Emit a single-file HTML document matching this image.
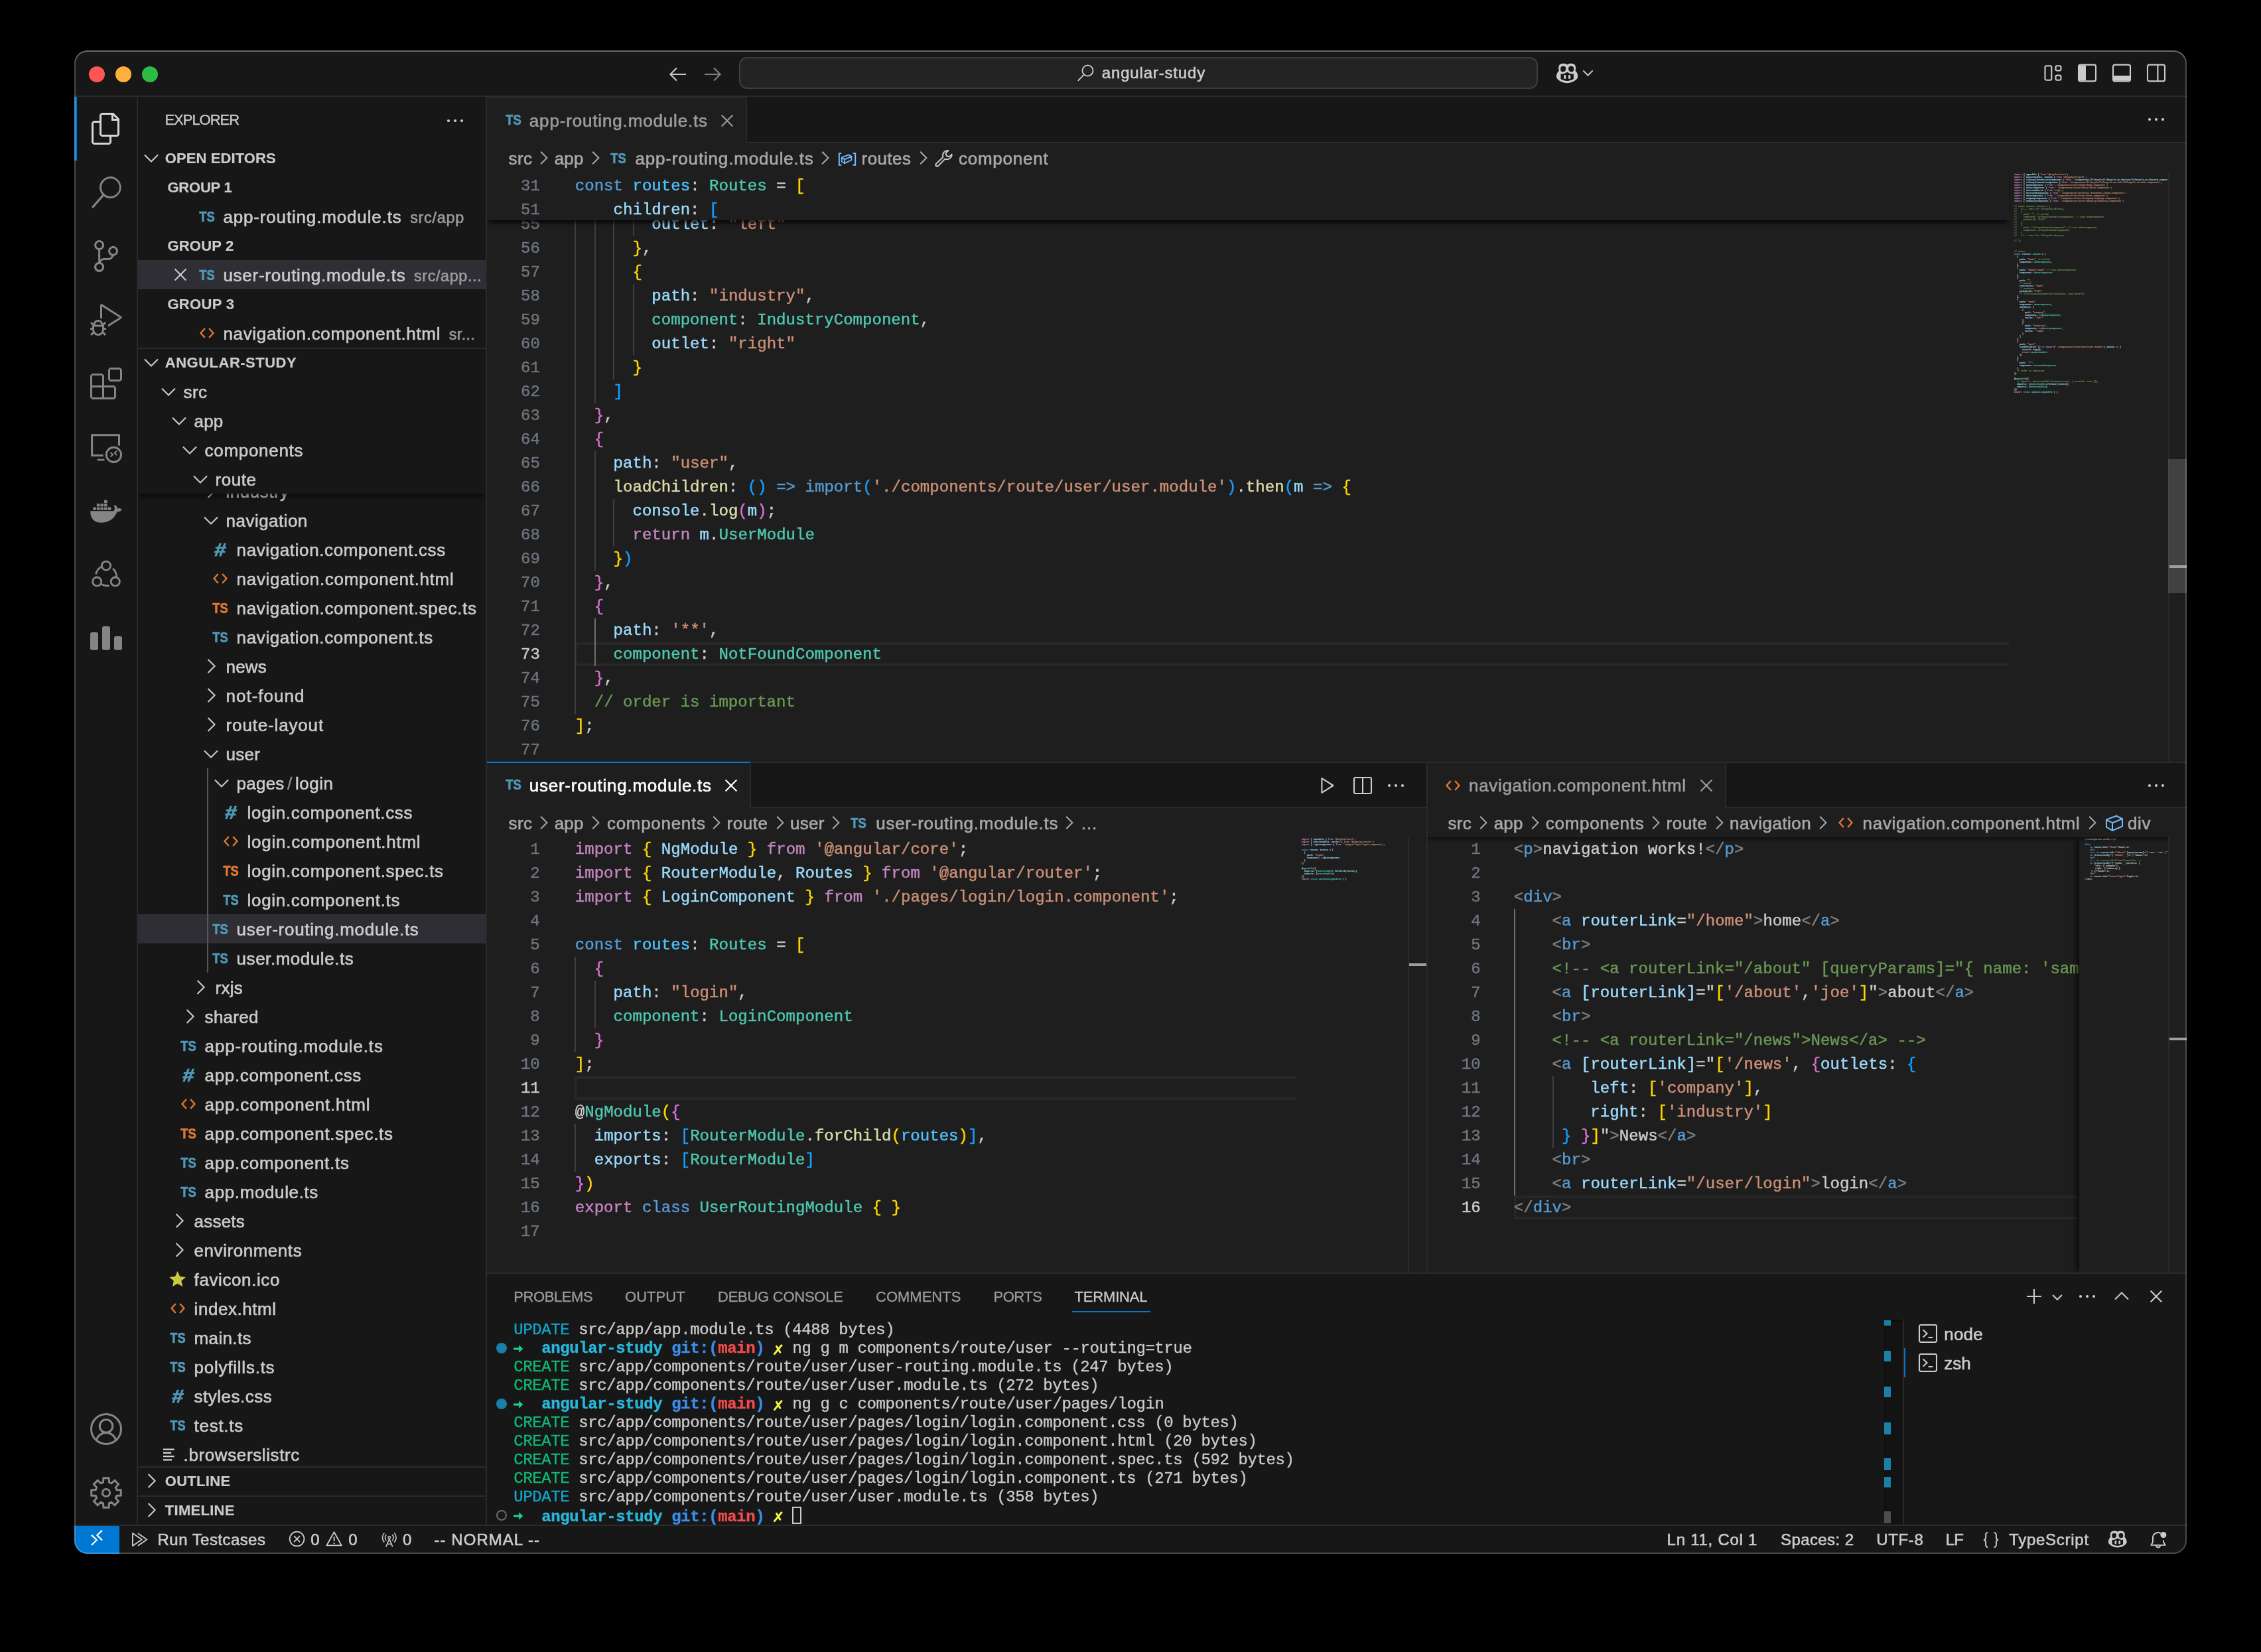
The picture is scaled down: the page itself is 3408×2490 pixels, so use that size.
<!DOCTYPE html><html><head><meta charset="utf-8"><title>angular-study</title><style>
*{box-sizing:border-box}
html,body{margin:0;padding:0;background:#000;overflow:hidden}
body{width:3408px;height:2490px}
#root{will-change:transform;opacity:.999;position:absolute;left:0;top:0;width:1704px;height:1245px;transform:scale(2);transform-origin:0 0;font-family:"Liberation Sans",sans-serif;font-size:13px;color:#ccc;-webkit-font-smoothing:antialiased;-webkit-text-stroke:.3px}
#win{position:absolute;left:56px;top:38px;width:1592px;height:1133px;border-radius:10px;overflow:hidden;background:#1f1f1f}
#winb{position:absolute;left:56px;top:38px;width:1592px;height:1133px;border-radius:10px;box-shadow:inset 0 0 0 1px rgba(255,255,255,.22), inset 0 1px 0 0 rgba(255,255,255,.18);pointer-events:none}
.abs{position:absolute}
.mono{font-family:"Liberation Mono",monospace}
.ui{letter-spacing:.33px}
.nw{white-space:pre}
/* code */
.code{position:absolute;font-family:"Liberation Mono",monospace;font-size:12.04px;line-height:18px;white-space:pre;color:#ccc;-webkit-text-stroke:.22px}
.code .tx,.code .num{top:.4px;transform:translateY(.5px)}
.code .st .tx,.code .st .num{top:1.4px}
.code .up .tx,.code .up .num{transform:translateY(-.5px)}
.ln{position:absolute;height:18px;left:0;right:0}
.num{position:absolute;text-align:right;color:#6e7681;width:40px}
.num.cur{color:#ccc}
.tx{position:absolute}
.gd{position:absolute;top:0;width:1px;height:18px;background:#404040}
.gd.a{background:#707070}
.k{color:#569cd6}.c{color:#c586c0}.v{color:#9cdcfe}.n{color:#4fc1ff}.t{color:#4ec9b0}.f{color:#dcdcaa}.s{color:#ce9178}.m{color:#6a9955}.p{color:#cccccc}.b1{color:#ffd700}.b2{color:#da70d6}.b3{color:#179fff}.g{color:#808080}.w{color:#cccccc}
/* tree */
.row{position:absolute;left:0;width:262px;height:22px;line-height:23px;white-space:pre;color:#ccc;letter-spacing:.45px}
.row .lbl{position:absolute;top:0}
.row .ico{position:absolute;top:3px;width:16px;height:16px}
.fi{position:absolute;top:0;width:20px;text-align:center;font-weight:700;letter-spacing:0;transform:scaleX(.82)}
.hdr{position:absolute;left:0;width:262px;height:22px;line-height:22px;font-size:11px;font-weight:700;color:#ccc;white-space:pre;-webkit-text-stroke:.1px}
.desc{color:#9d9d9d;font-size:11.7px}
</style></head><body><div id="root"><div id="win"><div class="abs" style="left:311px;top:35px;width:1281px;height:35px;background:#181818;border-bottom:1px solid #2b2b2b"></div><div class="abs nw" style="left:311px;top:35px;width:195.8px;height:35px;line-height:35px;background:#1f1f1f;border-right:1px solid #2b2b2b;border-top:1px solid #2b2b2b;color:#9d9d9d"><span class="abs" style="left:9.800000000000011px;top:-1px;width:20px;text-align:center;font-weight:700;font-size:11.2px;letter-spacing:0;color:#519aba;transform:scaleX(.82)">TS</span><span class="abs" style="left:31.899999999999977px;top:-.4px;transform:translateY(-.5px)"><span style="letter-spacing:0.421px">app-routing.module.ts</span></span><span class="abs" style="left:173.2px;top:8.5px"><svg xmlns="http://www.w3.org/2000/svg" viewBox="0 0 16 16" width="16" height="16" style="display:block;color:#9d9d9d;"><path d="M3.8 3.8L12.2 12.2M12.2 3.8L3.8 12.2" fill="none" stroke="currentColor" stroke-width="1.05" /></svg></span></div><div class="abs" style="left:1561px;top:44.3px"><svg xmlns="http://www.w3.org/2000/svg" viewBox="0 0 16 16" width="16" height="16" style="display:block;color:#ccc;"><circle cx="3" cy="8" r="1.05" fill="currentColor"/><circle cx="8" cy="8" r="1.05" fill="currentColor"/><circle cx="13" cy="8" r="1.05" fill="currentColor"/></svg></div><div class="abs nw" style="left:311px;top:70px;width:1281px;height:22px;line-height:22px;background:#1f1f1f;color:#a9a9a9;overflow:hidden"><span class="abs" style="left:16.30000000000001px;top:1px"><span style="letter-spacing:0.202px">src</span></span><span class="abs" style="left:34.89999999999999px;top:3px"><svg xmlns="http://www.w3.org/2000/svg" viewBox="0 0 16 16" width="16" height="16" style="display:block;color:#a9a9a9;"><path d="M5.6 3.4L10.2 8L5.6 12.6" fill="none" stroke="currentColor" stroke-width="1.0" /></svg></span><span class="abs" style="left:50.89999999999998px;top:1px"><span style="letter-spacing:0.066px">app</span></span><span class="abs" style="left:74.00000000000001px;top:3px"><svg xmlns="http://www.w3.org/2000/svg" viewBox="0 0 16 16" width="16" height="16" style="display:block;color:#a9a9a9;"><path d="M5.6 3.4L10.2 8L5.6 12.6" fill="none" stroke="currentColor" stroke-width="1.0" /></svg></span><span class="abs" style="left:89.30000000000001px;top:0px"><span class="abs" style="left:0px;top:0px;width:20px;text-align:center;font-weight:700;font-size:11.2px;letter-spacing:0;color:#519aba;transform:scaleX(.82)">TS</span></span><span class="abs" style="left:111.69999999999999px;top:1px"><span style="letter-spacing:0.421px">app-routing.module.ts</span></span><span class="abs" style="left:247.40000000000003px;top:3px"><svg xmlns="http://www.w3.org/2000/svg" viewBox="0 0 16 16" width="16" height="16" style="display:block;color:#a9a9a9;"><path d="M5.6 3.4L10.2 8L5.6 12.6" fill="none" stroke="currentColor" stroke-width="1.0" /></svg></span><span class="abs" style="left:263.79999999999995px;top:3.5px"><svg xmlns="http://www.w3.org/2000/svg" viewBox="0 0 16 16" width="15" height="15" style="display:block;color:#75beff;"><path d="M3.4 3.8H1.5V13.2H3.4M12.6 3.8H14.5V13.2H12.6" fill="none" stroke="currentColor" stroke-width="1.05" /><path d="M3.6 7.1L9.1 5L11.4 6.3L5.9 8.7ZM3.6 7.1V10.4L5.9 11.8V8.7M5.9 11.8L11.4 9.2V6.3" fill="none" stroke="currentColor" stroke-width="0.95" stroke-linejoin="round"/></svg></span><span class="abs" style="left:282.29999999999995px;top:1px"><span style="letter-spacing:0.21px">routes</span></span><span class="abs" style="left:320.99999999999994px;top:3px"><svg xmlns="http://www.w3.org/2000/svg" viewBox="0 0 16 16" width="16" height="16" style="display:block;color:#a9a9a9;"><path d="M5.6 3.4L10.2 8L5.6 12.6" fill="none" stroke="currentColor" stroke-width="1.0" /></svg></span><span class="abs" style="left:336.70000000000005px;top:3.5px"><svg xmlns="http://www.w3.org/2000/svg" viewBox="0 0 16 16" width="15" height="15" style="display:block;color:#ccc;"><path d="M14.2 4.6A3.9 3.9 0 0 1 8.7 8.3L3.3 13.9A1.2 1.2 0 0 1 1.6 12.2L7.2 6.8A3.9 3.9 0 0 1 11.4 1.6L9.3 3.8L10 5.8L12.1 6.6Z" fill="none" stroke="currentColor" stroke-width="1.05" stroke-linejoin="round"/></svg></span><span class="abs" style="left:355.5px;top:1px"><span style="letter-spacing:0.375px">component</span></span></div><div class="code" style="left:311px;top:92px;width:1267px;height:444px;overflow:hidden"><div class="ln " style="top:30px"><div class="gd" style="left:66.40px"></div><div class="gd" style="left:80.85px"></div><div class="gd" style="left:95.30px"></div><div class="gd" style="left:109.74px"></div><span class="num" style="left:0.0px">55</span><span class="tx" style="left:66.4px">        <span class="v">outlet</span>: <span class="s">&quot;left&quot;</span></span></div><div class="ln " style="top:48px"><div class="gd" style="left:66.40px"></div><div class="gd" style="left:80.85px"></div><div class="gd" style="left:95.30px"></div><span class="num" style="left:0.0px">56</span><span class="tx" style="left:66.4px">      <span class="b1">}</span>,</span></div><div class="ln " style="top:66px"><div class="gd" style="left:66.40px"></div><div class="gd" style="left:80.85px"></div><div class="gd" style="left:95.30px"></div><span class="num" style="left:0.0px">57</span><span class="tx" style="left:66.4px">      <span class="b1">{</span></span></div><div class="ln " style="top:84px"><div class="gd" style="left:66.40px"></div><div class="gd" style="left:80.85px"></div><div class="gd" style="left:95.30px"></div><div class="gd" style="left:109.74px"></div><span class="num" style="left:0.0px">58</span><span class="tx" style="left:66.4px">        <span class="v">path</span>: <span class="s">&quot;industry&quot;</span>,</span></div><div class="ln " style="top:102px"><div class="gd" style="left:66.40px"></div><div class="gd" style="left:80.85px"></div><div class="gd" style="left:95.30px"></div><div class="gd" style="left:109.74px"></div><span class="num" style="left:0.0px">59</span><span class="tx" style="left:66.4px">        <span class="t">component</span>: <span class="t">IndustryComponent</span>,</span></div><div class="ln " style="top:120px"><div class="gd" style="left:66.40px"></div><div class="gd" style="left:80.85px"></div><div class="gd" style="left:95.30px"></div><div class="gd" style="left:109.74px"></div><span class="num" style="left:0.0px">60</span><span class="tx" style="left:66.4px">        <span class="v">outlet</span>: <span class="s">&quot;right&quot;</span></span></div><div class="ln " style="top:138px"><div class="gd" style="left:66.40px"></div><div class="gd" style="left:80.85px"></div><div class="gd" style="left:95.30px"></div><span class="num" style="left:0.0px">61</span><span class="tx" style="left:66.4px">      <span class="b1">}</span></span></div><div class="ln " style="top:156px"><div class="gd" style="left:66.40px"></div><div class="gd" style="left:80.85px"></div><span class="num" style="left:0.0px">62</span><span class="tx" style="left:66.4px">    <span class="b3">]</span></span></div><div class="ln " style="top:174px"><div class="gd" style="left:66.40px"></div><span class="num" style="left:0.0px">63</span><span class="tx" style="left:66.4px">  <span class="b2">}</span>,</span></div><div class="ln " style="top:192px"><div class="gd" style="left:66.40px"></div><span class="num" style="left:0.0px">64</span><span class="tx" style="left:66.4px">  <span class="b2">{</span></span></div><div class="ln " style="top:210px"><div class="gd" style="left:66.40px"></div><div class="gd" style="left:80.85px"></div><span class="num" style="left:0.0px">65</span><span class="tx" style="left:66.4px">    <span class="v">path</span>: <span class="s">&quot;user&quot;</span>,</span></div><div class="ln " style="top:228px"><div class="gd" style="left:66.40px"></div><div class="gd" style="left:80.85px"></div><span class="num" style="left:0.0px">66</span><span class="tx" style="left:66.4px">    <span class="f">loadChildren</span>: <span class="b3">()</span> <span class="k">=&gt;</span> <span class="k">import</span><span class="b3">(</span><span class="s">&#x27;./components/route/user/user.module&#x27;</span><span class="b3">)</span>.<span class="f">then</span><span class="b3">(</span><span class="v">m</span> <span class="k">=&gt;</span> <span class="b1">{</span></span></div><div class="ln " style="top:246px"><div class="gd" style="left:66.40px"></div><div class="gd" style="left:80.85px"></div><div class="gd" style="left:95.30px"></div><span class="num" style="left:0.0px">67</span><span class="tx" style="left:66.4px">      <span class="v">console</span>.<span class="f">log</span><span class="b2">(</span><span class="v">m</span><span class="b2">)</span>;</span></div><div class="ln " style="top:264px"><div class="gd" style="left:66.40px"></div><div class="gd" style="left:80.85px"></div><div class="gd" style="left:95.30px"></div><span class="num" style="left:0.0px">68</span><span class="tx" style="left:66.4px">      <span class="c">return</span> <span class="v">m</span>.<span class="t">UserModule</span></span></div><div class="ln " style="top:282px"><div class="gd" style="left:66.40px"></div><div class="gd" style="left:80.85px"></div><span class="num" style="left:0.0px">69</span><span class="tx" style="left:66.4px">    <span class="b1">}</span><span class="b3">)</span></span></div><div class="ln " style="top:300px"><div class="gd" style="left:66.40px"></div><span class="num" style="left:0.0px">70</span><span class="tx" style="left:66.4px">  <span class="b2">}</span>,</span></div><div class="ln " style="top:318px"><div class="gd" style="left:66.40px"></div><span class="num" style="left:0.0px">71</span><span class="tx" style="left:66.4px">  <span class="b2">{</span></span></div><div class="ln " style="top:336px"><div class="gd" style="left:66.40px"></div><div class="gd a" style="left:80.85px"></div><span class="num" style="left:0.0px">72</span><span class="tx" style="left:66.4px">    <span class="v">path</span>: <span class="s">&#x27;**&#x27;</span>,</span></div><div class="ln " style="top:354px"><div class="abs" style="left:66.4px;top:0;width:1080.6px;height:18px;border:2px solid #282828;border-right:none"></div><div class="gd" style="left:66.40px"></div><div class="gd a" style="left:80.85px"></div><span class="num cur" style="left:0.0px">73</span><span class="tx" style="left:66.4px">    <span class="t">component</span>: <span class="t">NotFoundComponent</span></span></div><div class="ln " style="top:372px"><div class="gd" style="left:66.40px"></div><span class="num" style="left:0.0px">74</span><span class="tx" style="left:66.4px">  <span class="b2">}</span>,</span></div><div class="ln " style="top:390px"><div class="gd" style="left:66.40px"></div><span class="num" style="left:0.0px">75</span><span class="tx" style="left:66.4px">  <span class="m">// order is important</span></span></div><div class="ln " style="top:408px"><span class="num" style="left:0.0px">76</span><span class="tx" style="left:66.4px"><span class="b1">]</span>;</span></div><div class="ln " style="top:426px"><span class="num" style="left:0.0px">77</span><span class="tx" style="left:66.4px"></span></div><div class="abs" style="left:0;top:0;width:1147px;height:36px;background:#1f1f1f;box-shadow:0 3px 3px -1px rgba(0,0,0,.75)"><div class="ln st" style="top:0px"><span class="num" style="left:0.0px">31</span><span class="tx" style="left:66.4px"><span class="k">const</span> <span class="n">routes</span>: <span class="t">Routes</span> = <span class="b1">[</span></span></div><div class="ln st" style="top:18px"><span class="num" style="left:0.0px">51</span><span class="tx" style="left:66.4px">    <span class="v">children</span>: <span class="b3">[</span></span></div></div><div class="abs" style="left:1151px;top:0"><div style="width:116px;height:444px;overflow:hidden;font-family:'Liberation Mono',monospace;font-size:1.6665px;line-height:2px;white-space:pre;padding-top:.5px;font-weight:700;opacity:0.78;-webkit-text-stroke:0.1px;letter-spacing:0"><div style="height:2px"><span style="color:#c586c0">import</span> <span style="color:#cccccc">{</span> <span style="color:#9cdcfe">NgModule</span> <span style="color:#cccccc">}</span> <span style="color:#c586c0">from</span> <span style="color:#ce9178">&#x27;@angular/core&#x27;</span><span style="color:#cccccc">;</span></div><div style="height:2px"><span style="color:#c586c0">import</span> <span style="color:#cccccc">{</span> <span style="color:#9cdcfe">RouterModule</span><span style="color:#cccccc">,</span> <span style="color:#9cdcfe">Routes</span> <span style="color:#cccccc">}</span> <span style="color:#c586c0">from</span> <span style="color:#ce9178">&#x27;@angular/router&#x27;</span><span style="color:#cccccc">;</span></div><div style="height:2px"><span style="color:#c586c0">import</span> <span style="color:#cccccc">{</span> <span style="color:#9cdcfe">LifecycleOnDestoryComponent</span> <span style="color:#cccccc">}</span> <span style="color:#c586c0">from</span> '<span style="color:#cccccc">./</span><span style="color:#9cdcfe">components</span><span style="color:#cccccc">/</span><span style="color:#9cdcfe">lifecycle</span><span style="color:#cccccc">/</span><span style="color:#9cdcfe">lifecycle</span><span style="color:#cccccc">-</span><span style="color:#9cdcfe">on</span><span style="color:#cccccc">-</span><span style="color:#9cdcfe">destory</span><span style="color:#cccccc">/</span><span style="color:#9cdcfe">lifecycle</span><span style="color:#cccccc">-</span><span style="color:#9cdcfe">on</span><span style="color:#cccccc">-</span><span style="color:#9cdcfe">destory</span><span style="color:#cccccc">.</span><span style="color:#9cdcfe">compon</span></div><div style="height:2px"><span style="color:#c586c0">import</span> <span style="color:#cccccc">{</span> <span style="color:#9cdcfe">LifecycleOnInitComponent</span> <span style="color:#cccccc">}</span> <span style="color:#c586c0">from</span> <span style="color:#ce9178">&#x27;./components/lifecycle/lifecycle-on-init/lifecycle-on-init.component&#x27;</span><span style="color:#cccccc">;</span></div><div style="height:2px"><span style="color:#c586c0">import</span> <span style="color:#cccccc">{</span> <span style="color:#9cdcfe">HomeComponent</span> <span style="color:#cccccc">}</span> <span style="color:#c586c0">from</span> <span style="color:#ce9178">&#x27;./components/route/home/home.component&#x27;</span><span style="color:#cccccc">;</span></div><div style="height:2px"><span style="color:#c586c0">import</span> <span style="color:#cccccc">{</span> <span style="color:#9cdcfe">AboutComponent</span> <span style="color:#cccccc">}</span> <span style="color:#c586c0">from</span> <span style="color:#ce9178">&#x27;./components/route/about/about.component&#x27;</span><span style="color:#cccccc">;</span></div><div style="height:2px"><span style="color:#c586c0">import</span> <span style="color:#cccccc">{</span> <span style="color:#9cdcfe">NotFoundError</span> <span style="color:#cccccc">}</span> <span style="color:#c586c0">from</span> <span style="color:#ce9178">&#x27;rxjs&#x27;</span><span style="color:#cccccc">;</span></div><div style="height:2px"><span style="color:#c586c0">import</span> <span style="color:#cccccc">{</span> <span style="color:#9cdcfe">NotFoundComponent</span> <span style="color:#cccccc">}</span> <span style="color:#c586c0">from</span> <span style="color:#ce9178">&#x27;./components/route/not-found/not-found.component&#x27;</span><span style="color:#cccccc">;</span></div><div style="height:2px"><span style="color:#c586c0">import</span> <span style="color:#cccccc">{</span> <span style="color:#9cdcfe">NewsComponent</span> <span style="color:#cccccc">}</span> <span style="color:#c586c0">from</span> <span style="color:#ce9178">&#x27;./components/route/news/news.component&#x27;</span><span style="color:#cccccc">;</span></div><div style="height:2px"><span style="color:#c586c0">import</span> <span style="color:#cccccc">{</span> <span style="color:#9cdcfe">CompanyComponent</span> <span style="color:#cccccc">}</span> <span style="color:#c586c0">from</span> <span style="color:#ce9178">&#x27;./components/route/company/company.component&#x27;</span><span style="color:#cccccc">;</span></div><div style="height:2px"><span style="color:#c586c0">import</span> <span style="color:#cccccc">{</span> <span style="color:#9cdcfe">IndustryComponent</span> <span style="color:#cccccc">}</span> <span style="color:#c586c0">from</span> <span style="color:#ce9178">&#x27;./components/route/industry/industry.component&#x27;</span><span style="color:#cccccc">;</span></div><div style="height:2px"></div><div style="height:2px"><span style="color:#6a9955">// const routes: Routes = [</span></div><div style="height:2px"><span style="color:#6a9955">//   //--- test for lifecycle-destroy--</span></div><div style="height:2px"><span style="color:#6a9955">//   {</span></div><div style="height:2px"><span style="color:#6a9955">//     path: &quot;&quot;, // XX\\XX</span></div><div style="height:2px"><span style="color:#6a9955">//     component: LifecycleOnDestoryComponent, // XXXX HomeComponent</span></div><div style="height:2px"><span style="color:#6a9955">//     pathMatch: &quot;full&quot;</span></div><div style="height:2px"><span style="color:#6a9955">//   },</span></div><div style="height:2px"><span style="color:#6a9955">//   {</span></div><div style="height:2px"><span style="color:#6a9955">//     path: &quot;LifecycleOnInitComponent&quot;, // XXXX AboutComponent</span></div><div style="height:2px"><span style="color:#6a9955">//     component: LifecycleOnInitComponent</span></div><div style="height:2px"><span style="color:#6a9955">//   }</span></div><div style="height:2px"><span style="color:#6a9955">//   //--- test for lifecycle-destroy--</span></div><div style="height:2px"></div><div style="height:2px"><span style="color:#6a9955">// ];</span></div><div style="height:2px"></div><div style="height:2px"></div><div style="height:2px"></div><div style="height:2px"><span style="color:#6a9955">// route</span></div><div style="height:2px"><span style="color:#569cd6">const</span> <span style="color:#9cdcfe">routes</span><span style="color:#cccccc">:</span> <span style="color:#4ec9b0">Routes</span> <span style="color:#cccccc">=</span> <span style="color:#cccccc">[</span></div><div style="height:2px">  <span style="color:#cccccc">{</span></div><div style="height:2px">    <span style="color:#9cdcfe">path</span><span style="color:#cccccc">:</span> <span style="color:#ce9178">&quot;home&quot;</span><span style="color:#cccccc">,</span> <span style="color:#6a9955">// XX\\XX</span></div><div style="height:2px">    <span style="color:#9cdcfe">component</span><span style="color:#cccccc">:</span> <span style="color:#4ec9b0">HomeComponent</span><span style="color:#cccccc">,</span></div><div style="height:2px">  <span style="color:#cccccc">},</span></div><div style="height:2px">  <span style="color:#cccccc">{</span></div><div style="height:2px">    <span style="color:#9cdcfe">path</span><span style="color:#cccccc">:</span> <span style="color:#ce9178">&quot;about/:name&quot;</span><span style="color:#cccccc">,</span> <span style="color:#6a9955">// XXXX AboutComponent</span></div><div style="height:2px">    <span style="color:#9cdcfe">component</span><span style="color:#cccccc">:</span> <span style="color:#4ec9b0">AboutComponent</span></div><div style="height:2px">  <span style="color:#cccccc">},</span></div><div style="height:2px">  <span style="color:#cccccc">{</span></div><div style="height:2px">    <span style="color:#9cdcfe">path</span><span style="color:#cccccc">:</span> <span style="color:#ce9178">&quot;&quot;</span><span style="color:#cccccc">,</span></div><div style="height:2px">    <span style="color:#6a9955">// XXXXXX</span></div><div style="height:2px">    <span style="color:#9cdcfe">redirectTo</span><span style="color:#cccccc">:</span> <span style="color:#ce9178">&quot;home&quot;</span><span style="color:#cccccc">,</span></div><div style="height:2px">    <span style="color:#6a9955">// XXXXXXXX</span></div><div style="height:2px">    <span style="color:#9cdcfe">pathMatch</span><span style="color:#cccccc">:</span> <span style="color:#ce9178">&quot;full&quot;</span></div><div style="height:2px">    <span style="color:#6a9955">// full\\XXXXXXXXXXprefix\\XXXXXXXX, XXXX\\prefix</span></div><div style="height:2px">  <span style="color:#cccccc">},</span></div><div style="height:2px">  <span style="color:#cccccc">{</span></div><div style="height:2px">    <span style="color:#9cdcfe">path</span><span style="color:#cccccc">:</span> <span style="color:#ce9178">&quot;news&quot;</span><span style="color:#cccccc">,</span></div><div style="height:2px">    <span style="color:#9cdcfe">component</span><span style="color:#cccccc">:</span> <span style="color:#4ec9b0">NewsComponent</span><span style="color:#cccccc">,</span></div><div style="height:2px">    <span style="color:#9cdcfe">children</span><span style="color:#cccccc">:</span> <span style="color:#cccccc">[</span></div><div style="height:2px">      <span style="color:#cccccc">{</span></div><div style="height:2px">        <span style="color:#9cdcfe">path</span><span style="color:#cccccc">:</span> <span style="color:#ce9178">&quot;company&quot;</span><span style="color:#cccccc">,</span></div><div style="height:2px">        <span style="color:#9cdcfe">component</span><span style="color:#cccccc">:</span> <span style="color:#4ec9b0">CompanyComponent</span><span style="color:#cccccc">,</span></div><div style="height:2px">        <span style="color:#9cdcfe">outlet</span><span style="color:#cccccc">:</span> <span style="color:#ce9178">&quot;left&quot;</span></div><div style="height:2px">      <span style="color:#cccccc">},</span></div><div style="height:2px">      <span style="color:#cccccc">{</span></div><div style="height:2px">        <span style="color:#9cdcfe">path</span><span style="color:#cccccc">:</span> <span style="color:#ce9178">&quot;industry&quot;</span><span style="color:#cccccc">,</span></div><div style="height:2px">        <span style="color:#9cdcfe">component</span><span style="color:#cccccc">:</span> <span style="color:#4ec9b0">IndustryComponent</span><span style="color:#cccccc">,</span></div><div style="height:2px">        <span style="color:#9cdcfe">outlet</span><span style="color:#cccccc">:</span> <span style="color:#ce9178">&quot;right&quot;</span></div><div style="height:2px">      <span style="color:#cccccc">}</span></div><div style="height:2px">    <span style="color:#cccccc">]</span></div><div style="height:2px">  <span style="color:#cccccc">},</span></div><div style="height:2px">  <span style="color:#cccccc">{</span></div><div style="height:2px">    <span style="color:#9cdcfe">path</span><span style="color:#cccccc">:</span> <span style="color:#ce9178">&quot;user&quot;</span><span style="color:#cccccc">,</span></div><div style="height:2px">    <span style="color:#9cdcfe">loadChildren</span><span style="color:#cccccc">:</span> <span style="color:#cccccc">()</span> <span style="color:#569cd6">=&gt;</span> <span style="color:#c586c0">import</span><span style="color:#cccccc">(</span><span style="color:#ce9178">&#x27;./components/route/user/user.module&#x27;</span><span style="color:#cccccc">).</span><span style="color:#9cdcfe">then</span><span style="color:#cccccc">(</span><span style="color:#9cdcfe">m</span> <span style="color:#569cd6">=&gt;</span> <span style="color:#cccccc">{</span></div><div style="height:2px">      <span style="color:#9cdcfe">console</span><span style="color:#cccccc">.</span><span style="color:#9cdcfe">log</span><span style="color:#cccccc">(</span><span style="color:#9cdcfe">m</span><span style="color:#cccccc">);</span></div><div style="height:2px">      <span style="color:#c586c0">return</span> <span style="color:#9cdcfe">m</span><span style="color:#cccccc">.</span><span style="color:#4ec9b0">UserModule</span></div><div style="height:2px">    <span style="color:#cccccc">})</span></div><div style="height:2px">  <span style="color:#cccccc">},</span></div><div style="height:2px">  <span style="color:#cccccc">{</span></div><div style="height:2px">    <span style="color:#9cdcfe">path</span><span style="color:#cccccc">:</span> <span style="color:#ce9178">&#x27;**&#x27;</span><span style="color:#cccccc">,</span></div><div style="height:2px">    <span style="color:#9cdcfe">component</span><span style="color:#cccccc">:</span> <span style="color:#4ec9b0">NotFoundComponent</span></div><div style="height:2px">  <span style="color:#cccccc">},</span></div><div style="height:2px">  <span style="color:#6a9955">// order is important</span></div><div style="height:2px"><span style="color:#cccccc">];</span></div><div style="height:2px"></div><div style="height:2px"><span style="color:#cccccc">@</span><span style="color:#4ec9b0">NgModule</span><span style="color:#cccccc">({</span></div><div style="height:2px">  <span style="color:#6a9955">// imports: [RouterModule.forRoot(routes, { useHash: true })],</span></div><div style="height:2px">  <span style="color:#9cdcfe">imports</span><span style="color:#cccccc">:</span> <span style="color:#cccccc">[</span><span style="color:#4ec9b0">RouterModule</span><span style="color:#cccccc">.</span><span style="color:#9cdcfe">forRoot</span><span style="color:#cccccc">(</span><span style="color:#9cdcfe">routes</span><span style="color:#cccccc">)],</span></div><div style="height:2px">  <span style="color:#9cdcfe">exports</span><span style="color:#cccccc">:</span> <span style="color:#cccccc">[</span><span style="color:#4ec9b0">RouterModule</span><span style="color:#cccccc">]</span></div><div style="height:2px"><span style="color:#cccccc">})</span></div><div style="height:2px"><span style="color:#c586c0">export</span> <span style="color:#569cd6">class</span> <span style="color:#4ec9b0">AppRoutingModule</span> <span style="color:#cccccc">{</span> <span style="color:#cccccc">}</span></div><div style="height:2px"></div></div></div></div><div class="abs" style="left:1578px;top:92px;width:14px;height:444px;border-left:1px solid #2a2a2a"><div class="abs" style="left:-1px;top:216.0px;width:14px;height:100.75px;background:rgba(121,121,121,.4)"></div><div class="abs" style="left:0;top:295.5px;width:14px;height:2px;background:#a0a0a0"></div></div><div class="abs" style="left:311px;top:536px;width:708px;height:35px;background:#181818;border-bottom:1px solid #2b2b2b"></div><div class="abs nw" style="left:311px;top:536px;width:198.6px;height:35px;line-height:35px;background:#1f1f1f;border-right:1px solid #2b2b2b;border-top:1px solid #0078d4;color:#fff"><span class="abs" style="left:9.800000000000011px;top:-1px;width:20px;text-align:center;font-weight:700;font-size:11.2px;letter-spacing:0;color:#519aba;transform:scaleX(.82)">TS</span><span class="abs" style="left:31.899999999999977px;top:-.4px;transform:translateY(-.5px)"><span style="letter-spacing:0.371px">user-routing.module.ts</span></span><span class="abs" style="left:176.39999999999998px;top:8.5px"><svg xmlns="http://www.w3.org/2000/svg" viewBox="0 0 16 16" width="16" height="16" style="display:block;color:#fff;"><path d="M3.8 3.8L12.2 12.2M12.2 3.8L3.8 12.2" fill="none" stroke="currentColor" stroke-width="1.05" /></svg></span></div><div class="abs" style="left:935.6px;top:545.8px"><svg xmlns="http://www.w3.org/2000/svg" viewBox="0 0 16 16" width="16" height="16" style="display:block;color:#ccc;"><path d="M4.2 2.6V13.4L12.8 8Z" fill="none" stroke="currentColor" stroke-width="1.05" stroke-linejoin="round"/></svg></div><div class="abs" style="left:962.5px;top:545.8px"><svg xmlns="http://www.w3.org/2000/svg" viewBox="0 0 16 16" width="16" height="16" style="display:block;color:#ccc;"><rect x="1.5" y="2" width="13" height="12" rx="1" fill="none" stroke="currentColor" stroke-width="1.05"/><path d="M8 2V14" fill="none" stroke="currentColor" stroke-width="1.05" /></svg></div><div class="abs" style="left:987.9px;top:545.8px"><svg xmlns="http://www.w3.org/2000/svg" viewBox="0 0 16 16" width="16" height="16" style="display:block;color:#ccc;"><circle cx="3" cy="8" r="1.05" fill="currentColor"/><circle cx="8" cy="8" r="1.05" fill="currentColor"/><circle cx="13" cy="8" r="1.05" fill="currentColor"/></svg></div><div class="abs nw" style="left:311px;top:571px;width:708px;height:22px;line-height:22px;background:#1f1f1f;color:#a9a9a9;overflow:hidden"><span class="abs" style="left:16.30000000000001px;top:1px"><span style="letter-spacing:0.202px">src</span></span><span class="abs" style="left:34.89999999999999px;top:3px"><svg xmlns="http://www.w3.org/2000/svg" viewBox="0 0 16 16" width="16" height="16" style="display:block;color:#a9a9a9;"><path d="M5.6 3.4L10.2 8L5.6 12.6" fill="none" stroke="currentColor" stroke-width="1.0" /></svg></span><span class="abs" style="left:50.89999999999998px;top:1px"><span style="letter-spacing:0.066px">app</span></span><span class="abs" style="left:74.00000000000001px;top:3px"><svg xmlns="http://www.w3.org/2000/svg" viewBox="0 0 16 16" width="16" height="16" style="display:block;color:#a9a9a9;"><path d="M5.6 3.4L10.2 8L5.6 12.6" fill="none" stroke="currentColor" stroke-width="1.0" /></svg></span><span class="abs" style="left:90.5px;top:1px"><span style="letter-spacing:0.347px">components</span></span><span class="abs" style="left:165.2px;top:3px"><svg xmlns="http://www.w3.org/2000/svg" viewBox="0 0 16 16" width="16" height="16" style="display:block;color:#a9a9a9;"><path d="M5.6 3.4L10.2 8L5.6 12.6" fill="none" stroke="currentColor" stroke-width="1.0" /></svg></span><span class="abs" style="left:180.8px;top:1px"><span style="letter-spacing:0.252px">route</span></span><span class="abs" style="left:212.7px;top:3px"><svg xmlns="http://www.w3.org/2000/svg" viewBox="0 0 16 16" width="16" height="16" style="display:block;color:#a9a9a9;"><path d="M5.6 3.4L10.2 8L5.6 12.6" fill="none" stroke="currentColor" stroke-width="1.0" /></svg></span><span class="abs" style="left:228.5px;top:1px"><span style="letter-spacing:0.126px">user</span></span><span class="abs" style="left:255.40000000000003px;top:3px"><svg xmlns="http://www.w3.org/2000/svg" viewBox="0 0 16 16" width="16" height="16" style="display:block;color:#a9a9a9;"><path d="M5.6 3.4L10.2 8L5.6 12.6" fill="none" stroke="currentColor" stroke-width="1.0" /></svg></span><span class="abs" style="left:270.29999999999995px;top:0px"><span class="abs" style="left:0px;top:0px;width:20px;text-align:center;font-weight:700;font-size:11.2px;letter-spacing:0;color:#519aba;transform:scaleX(.82)">TS</span></span><span class="abs" style="left:293.1px;top:1px"><span style="letter-spacing:0.371px">user-routing.module.ts</span></span><span class="abs" style="left:431.40000000000003px;top:3px"><svg xmlns="http://www.w3.org/2000/svg" viewBox="0 0 16 16" width="16" height="16" style="display:block;color:#a9a9a9;"><path d="M5.6 3.4L10.2 8L5.6 12.6" fill="none" stroke="currentColor" stroke-width="1.0" /></svg></span><span class="abs" style="left:447.9px;top:1px"><span style="letter-spacing:0.45px">...</span></span></div><div class="code" style="left:311px;top:593px;width:694px;height:328px;overflow:hidden"><div class="ln " style="top:0px"><span class="num" style="left:-0.10000000000000142px">1</span><span class="tx" style="left:66.4px"><span class="c">import</span> <span class="b1">{</span> <span class="v">NgModule</span> <span class="b1">}</span> <span class="c">from</span> <span class="s">&#x27;@angular/core&#x27;</span>;</span></div><div class="ln " style="top:18px"><span class="num" style="left:-0.10000000000000142px">2</span><span class="tx" style="left:66.4px"><span class="c">import</span> <span class="b1">{</span> <span class="v">RouterModule</span>, <span class="v">Routes</span> <span class="b1">}</span> <span class="c">from</span> <span class="s">&#x27;@angular/router&#x27;</span>;</span></div><div class="ln " style="top:36px"><span class="num" style="left:-0.10000000000000142px">3</span><span class="tx" style="left:66.4px"><span class="c">import</span> <span class="b1">{</span> <span class="v">LoginComponent</span> <span class="b1">}</span> <span class="c">from</span> <span class="s">&#x27;./pages/login/login.component&#x27;</span>;</span></div><div class="ln " style="top:54px"><span class="num" style="left:-0.10000000000000142px">4</span><span class="tx" style="left:66.4px"></span></div><div class="ln " style="top:72px"><span class="num" style="left:-0.10000000000000142px">5</span><span class="tx" style="left:66.4px"><span class="k">const</span> <span class="n">routes</span>: <span class="t">Routes</span> = <span class="b1">[</span></span></div><div class="ln " style="top:90px"><div class="gd" style="left:66.40px"></div><span class="num" style="left:-0.10000000000000142px">6</span><span class="tx" style="left:66.4px">  <span class="b2">{</span></span></div><div class="ln " style="top:108px"><div class="gd" style="left:66.40px"></div><div class="gd" style="left:80.85px"></div><span class="num" style="left:-0.10000000000000142px">7</span><span class="tx" style="left:66.4px">    <span class="v">path</span>: <span class="s">&quot;login&quot;</span>,</span></div><div class="ln " style="top:126px"><div class="gd" style="left:66.40px"></div><div class="gd" style="left:80.85px"></div><span class="num" style="left:-0.10000000000000142px">8</span><span class="tx" style="left:66.4px">    <span class="t">component</span>: <span class="t">LoginComponent</span></span></div><div class="ln " style="top:144px"><div class="gd" style="left:66.40px"></div><span class="num" style="left:-0.10000000000000142px">9</span><span class="tx" style="left:66.4px">  <span class="b2">}</span></span></div><div class="ln " style="top:162px"><span class="num" style="left:-0.10000000000000142px">10</span><span class="tx" style="left:66.4px"><span class="b1">]</span>;</span></div><div class="ln " style="top:180px"><div class="abs" style="left:66.4px;top:0;width:543.5px;height:18px;border:2px solid #282828;border-right:none"></div><span class="num cur" style="left:-0.10000000000000142px">11</span><span class="tx" style="left:66.4px"></span></div><div class="ln " style="top:198px"><span class="num" style="left:-0.10000000000000142px">12</span><span class="tx" style="left:66.4px">@<span class="t">NgModule</span><span class="b1">(</span><span class="b2">{</span></span></div><div class="ln " style="top:216px"><div class="gd" style="left:66.40px"></div><span class="num" style="left:-0.10000000000000142px">13</span><span class="tx" style="left:66.4px">  <span class="v">imports</span>: <span class="b3">[</span><span class="t">RouterModule</span>.<span class="f">forChild</span><span class="b1">(</span><span class="n">routes</span><span class="b1">)</span><span class="b3">]</span>,</span></div><div class="ln " style="top:234px"><div class="gd" style="left:66.40px"></div><span class="num" style="left:-0.10000000000000142px">14</span><span class="tx" style="left:66.4px">  <span class="v">exports</span>: <span class="b3">[</span><span class="t">RouterModule</span><span class="b3">]</span></span></div><div class="ln " style="top:252px"><span class="num" style="left:-0.10000000000000142px">15</span><span class="tx" style="left:66.4px"><span class="b2">}</span><span class="b1">)</span></span></div><div class="ln " style="top:270px"><span class="num" style="left:-0.10000000000000142px">16</span><span class="tx" style="left:66.4px"><span class="c">export</span> <span class="k">class</span> <span class="t">UserRoutingModule</span> <span class="b1">{ }</span></span></div><div class="ln " style="top:288px"><span class="num" style="left:-0.10000000000000142px">17</span><span class="tx" style="left:66.4px"></span></div><div class="abs" style="left:613.9px;top:0"><div style="width:80px;height:328px;overflow:hidden;font-family:'Liberation Mono',monospace;font-size:1.6665px;line-height:2px;white-space:pre;padding-top:.5px;font-weight:700;opacity:0.78;-webkit-text-stroke:0.1px;letter-spacing:0"><div style="height:2px"><span style="color:#c586c0">import</span> <span style="color:#cccccc">{</span> <span style="color:#9cdcfe">NgModule</span> <span style="color:#cccccc">}</span> <span style="color:#c586c0">from</span> <span style="color:#ce9178">&#x27;@angular/core&#x27;</span><span style="color:#cccccc">;</span></div><div style="height:2px"><span style="color:#c586c0">import</span> <span style="color:#cccccc">{</span> <span style="color:#9cdcfe">RouterModule</span><span style="color:#cccccc">,</span> <span style="color:#9cdcfe">Routes</span> <span style="color:#cccccc">}</span> <span style="color:#c586c0">from</span> <span style="color:#ce9178">&#x27;@angular/router&#x27;</span><span style="color:#cccccc">;</span></div><div style="height:2px"><span style="color:#c586c0">import</span> <span style="color:#cccccc">{</span> <span style="color:#9cdcfe">LoginComponent</span> <span style="color:#cccccc">}</span> <span style="color:#c586c0">from</span> <span style="color:#ce9178">&#x27;./pages/login/login.component&#x27;</span><span style="color:#cccccc">;</span></div><div style="height:2px"></div><div style="height:2px"><span style="color:#569cd6">const</span> <span style="color:#9cdcfe">routes</span><span style="color:#cccccc">:</span> <span style="color:#9cdcfe">Routes</span> <span style="color:#cccccc">=</span> <span style="color:#cccccc">[</span></div><div style="height:2px">  <span style="color:#cccccc">{</span></div><div style="height:2px">    <span style="color:#9cdcfe">path</span><span style="color:#cccccc">:</span> <span style="color:#ce9178">&quot;login&quot;</span><span style="color:#cccccc">,</span></div><div style="height:2px">    <span style="color:#9cdcfe">component</span><span style="color:#cccccc">:</span> <span style="color:#9cdcfe">LoginComponent</span></div><div style="height:2px">  <span style="color:#cccccc">}</span></div><div style="height:2px"><span style="color:#cccccc">];</span></div><div style="height:2px"></div><div style="height:2px"><span style="color:#cccccc">@</span><span style="color:#4ec9b0">NgModule</span><span style="color:#cccccc">({</span></div><div style="height:2px">  <span style="color:#9cdcfe">imports</span><span style="color:#cccccc">:</span> <span style="color:#cccccc">[</span><span style="color:#4ec9b0">RouterModule</span><span style="color:#cccccc">.</span><span style="color:#9cdcfe">forChild</span><span style="color:#cccccc">(</span><span style="color:#9cdcfe">routes</span><span style="color:#cccccc">)],</span></div><div style="height:2px">  <span style="color:#9cdcfe">exports</span><span style="color:#cccccc">:</span> <span style="color:#cccccc">[</span><span style="color:#4ec9b0">RouterModule</span><span style="color:#cccccc">]</span></div><div style="height:2px"><span style="color:#cccccc">})</span></div><div style="height:2px"><span style="color:#c586c0">export</span> <span style="color:#569cd6">class</span> <span style="color:#4ec9b0">UserRoutingModule</span> <span style="color:#cccccc">{</span> <span style="color:#cccccc">}</span></div><div style="height:2px"></div></div></div></div><div class="abs" style="left:1005px;top:593px;width:14px;height:328px;border-left:1px solid #2a2a2a"><div class="abs" style="left:0;top:94.5px;width:14px;height:2px;background:#a0a0a0"></div></div><div class="abs" style="left:1019px;top:536px;width:1px;height:385px;background:#2b2b2b"></div><div class="abs" style="left:1020px;top:536px;width:572px;height:35px;background:#181818;border-bottom:1px solid #2b2b2b"></div><div class="abs nw" style="left:1020px;top:536px;width:224.5px;height:35px;line-height:35px;background:#1f1f1f;border-right:1px solid #2b2b2b;border-top:1px solid #2b2b2b;color:#9d9d9d"><span class="abs" style="left:11.8px;top:10px"><svg xmlns="http://www.w3.org/2000/svg" viewBox="0 0 16 16" width="14" height="14" style="display:block;color:#e37933;"><path d="M6.2 4L2.6 8L6.2 12M9.8 4L13.4 8L9.8 12" fill="none" stroke="currentColor" stroke-width="1.35" /></svg></span><span class="abs" style="left:31.00729713952137px;top:-.4px;transform:translateY(-.5px)"><span style="letter-spacing:0.341px">navigation.component.html</span></span><span class="abs" style="left:201.7034442498541px;top:8.5px"><svg xmlns="http://www.w3.org/2000/svg" viewBox="0 0 16 16" width="16" height="16" style="display:block;color:#9d9d9d;"><path d="M3.8 3.8L12.2 12.2M12.2 3.8L3.8 12.2" fill="none" stroke="currentColor" stroke-width="1.05" /></svg></span></div><div class="abs" style="left:1561px;top:545.8px"><svg xmlns="http://www.w3.org/2000/svg" viewBox="0 0 16 16" width="16" height="16" style="display:block;color:#ccc;"><circle cx="3" cy="8" r="1.05" fill="currentColor"/><circle cx="8" cy="8" r="1.05" fill="currentColor"/><circle cx="13" cy="8" r="1.05" fill="currentColor"/></svg></div><div class="abs nw" style="left:1020px;top:571px;width:572px;height:22px;line-height:22px;background:#1f1f1f;color:#a9a9a9;overflow:hidden"><span class="abs" style="left:15.200000000000045px;top:1px"><span style="letter-spacing:0.202px">src</span></span><span class="abs" style="left:34.100000000000094px;top:3px"><svg xmlns="http://www.w3.org/2000/svg" viewBox="0 0 16 16" width="16" height="16" style="display:block;color:#a9a9a9;"><path d="M5.6 3.4L10.2 8L5.6 12.6" fill="none" stroke="currentColor" stroke-width="1.0" /></svg></span><span class="abs" style="left:49.90000000000009px;top:1px"><span style="letter-spacing:0.066px">app</span></span><span class="abs" style="left:72.99999999999996px;top:3px"><svg xmlns="http://www.w3.org/2000/svg" viewBox="0 0 16 16" width="16" height="16" style="display:block;color:#a9a9a9;"><path d="M5.6 3.4L10.2 8L5.6 12.6" fill="none" stroke="currentColor" stroke-width="1.0" /></svg></span><span class="abs" style="left:88.90000000000009px;top:1px"><span style="letter-spacing:0.347px">components</span></span><span class="abs" style="left:164.2px;top:3px"><svg xmlns="http://www.w3.org/2000/svg" viewBox="0 0 16 16" width="16" height="16" style="display:block;color:#a9a9a9;"><path d="M5.6 3.4L10.2 8L5.6 12.6" fill="none" stroke="currentColor" stroke-width="1.0" /></svg></span><span class="abs" style="left:179.79999999999995px;top:1px"><span style="letter-spacing:0.252px">route</span></span><span class="abs" style="left:211.7px;top:3px"><svg xmlns="http://www.w3.org/2000/svg" viewBox="0 0 16 16" width="16" height="16" style="display:block;color:#a9a9a9;"><path d="M5.6 3.4L10.2 8L5.6 12.6" fill="none" stroke="currentColor" stroke-width="1.0" /></svg></span><span class="abs" style="left:227.5px;top:1px"><span style="letter-spacing:0.232px">navigation</span></span><span class="abs" style="left:290.2px;top:3px"><svg xmlns="http://www.w3.org/2000/svg" viewBox="0 0 16 16" width="16" height="16" style="display:block;color:#a9a9a9;"><path d="M5.6 3.4L10.2 8L5.6 12.6" fill="none" stroke="currentColor" stroke-width="1.0" /></svg></span><span class="abs" style="left:308.29999999999995px;top:4px"><svg xmlns="http://www.w3.org/2000/svg" viewBox="0 0 16 16" width="14" height="14" style="display:block;color:#e37933;"><path d="M6.2 4L2.6 8L6.2 12M9.8 4L13.4 8L9.8 12" fill="none" stroke="currentColor" stroke-width="1.35" /></svg></span><span class="abs" style="left:327.79999999999995px;top:1px"><span style="letter-spacing:0.341px">navigation.component.html</span></span><span class="abs" style="left:492.7px;top:3px"><svg xmlns="http://www.w3.org/2000/svg" viewBox="0 0 16 16" width="16" height="16" style="display:block;color:#a9a9a9;"><path d="M5.6 3.4L10.2 8L5.6 12.6" fill="none" stroke="currentColor" stroke-width="1.0" /></svg></span><span class="abs" style="left:509.5px;top:3.5px"><svg xmlns="http://www.w3.org/2000/svg" viewBox="0 0 16 16" width="15" height="15" style="display:block;color:#75beff;"><path d="M1.6 5L9.6 2L14.4 4.4V10.4L6.4 13.8L1.6 11ZM1.6 5L6.4 7.6V13.8M6.4 7.6L14.4 4.4" fill="none" stroke="currentColor" stroke-width="1.05" stroke-linejoin="round"/></svg></span><span class="abs" style="left:527.5px;top:1px"><span style="letter-spacing:0.292px">div</span></span></div><div class="code" style="left:1020px;top:593px;width:558px;height:328px;overflow:hidden"><div class="ln " style="top:0px"><span class="num" style="left:-0.10000000000000142px">1</span><span class="tx" style="left:64.9px"><span class="g">&lt;</span><span class="k">p</span><span class="g">&gt;</span>navigation works!<span class="g">&lt;/</span><span class="k">p</span><span class="g">&gt;</span></span></div><div class="ln " style="top:18px"><span class="num" style="left:-0.10000000000000142px">2</span><span class="tx" style="left:64.9px"></span></div><div class="ln " style="top:36px"><span class="num" style="left:-0.10000000000000142px">3</span><span class="tx" style="left:64.9px"><span class="g">&lt;</span><span class="k">div</span><span class="g">&gt;</span></span></div><div class="ln " style="top:54px"><div class="gd a" style="left:64.90px"></div><span class="num" style="left:-0.10000000000000142px">4</span><span class="tx" style="left:64.9px">    <span class="g">&lt;</span><span class="k">a</span> <span class="v">routerLink</span>=<span class="s">&quot;/home&quot;</span><span class="g">&gt;</span>home<span class="g">&lt;/</span><span class="k">a</span><span class="g">&gt;</span></span></div><div class="ln " style="top:72px"><div class="gd a" style="left:64.90px"></div><span class="num" style="left:-0.10000000000000142px">5</span><span class="tx" style="left:64.9px">    <span class="g">&lt;</span><span class="k">br</span><span class="g">&gt;</span></span></div><div class="ln " style="top:90px"><div class="gd a" style="left:64.90px"></div><span class="num" style="left:-0.10000000000000142px">6</span><span class="tx" style="left:64.9px">    <span class="m">&lt;!-- &lt;a routerLink=&quot;/about&quot; [queryParams]=&quot;{ name: &#x27;sam&#x27; }&quot; [fragment]=&quot;&#x27;intro&#x27;&quot;&gt;about&lt;/a&gt; --&gt;</span></span></div><div class="ln " style="top:108px"><div class="gd a" style="left:64.90px"></div><span class="num" style="left:-0.10000000000000142px">7</span><span class="tx" style="left:64.9px">    <span class="g">&lt;</span><span class="k">a</span> <span class="v">[routerLink]</span>=&quot;<span class="b1">[</span><span class="s">&#x27;/about&#x27;</span>,<span class="s">&#x27;joe&#x27;</span><span class="b1">]</span>&quot;<span class="g">&gt;</span>about<span class="g">&lt;/</span><span class="k">a</span><span class="g">&gt;</span></span></div><div class="ln " style="top:126px"><div class="gd a" style="left:64.90px"></div><span class="num" style="left:-0.10000000000000142px">8</span><span class="tx" style="left:64.9px">    <span class="g">&lt;</span><span class="k">br</span><span class="g">&gt;</span></span></div><div class="ln " style="top:144px"><div class="gd a" style="left:64.90px"></div><span class="num" style="left:-0.10000000000000142px">9</span><span class="tx" style="left:64.9px">    <span class="m">&lt;!-- &lt;a routerLink=&quot;/news&quot;&gt;News&lt;/a&gt; --&gt;</span></span></div><div class="ln " style="top:162px"><div class="gd a" style="left:64.90px"></div><span class="num" style="left:-0.10000000000000142px">10</span><span class="tx" style="left:64.9px">    <span class="g">&lt;</span><span class="k">a</span> <span class="v">[routerLink]</span>=&quot;<span class="b1">[</span><span class="s">&#x27;/news&#x27;</span>, <span class="b2">{</span><span class="v">outlets</span>: <span class="b3">{</span></span></div><div class="ln " style="top:180px"><div class="gd a" style="left:64.90px"></div><div class="gd" style="left:93.80px"></div><span class="num" style="left:-0.10000000000000142px">11</span><span class="tx" style="left:64.9px">        <span class="v">left</span>: <span class="b1">[</span><span class="s">&#x27;company&#x27;</span><span class="b1">]</span>,</span></div><div class="ln " style="top:198px"><div class="gd a" style="left:64.90px"></div><div class="gd" style="left:93.80px"></div><span class="num" style="left:-0.10000000000000142px">12</span><span class="tx" style="left:64.9px">        <span class="v">right</span>: <span class="b1">[</span><span class="s">&#x27;industry&#x27;</span><span class="b1">]</span></span></div><div class="ln " style="top:216px"><div class="gd a" style="left:64.90px"></div><div class="gd" style="left:93.80px"></div><span class="num" style="left:-0.10000000000000142px">13</span><span class="tx" style="left:64.9px">     <span class="b3">}</span> <span class="b2">}</span><span class="b1">]</span>&quot;<span class="g">&gt;</span>News<span class="g">&lt;/</span><span class="k">a</span><span class="g">&gt;</span></span></div><div class="ln " style="top:234px"><div class="gd a" style="left:64.90px"></div><span class="num" style="left:-0.10000000000000142px">14</span><span class="tx" style="left:64.9px">    <span class="g">&lt;</span><span class="k">br</span><span class="g">&gt;</span></span></div><div class="ln " style="top:252px"><div class="gd a" style="left:64.90px"></div><span class="num" style="left:-0.10000000000000142px">15</span><span class="tx" style="left:64.9px">    <span class="g">&lt;</span><span class="k">a</span> <span class="v">routerLink</span>=<span class="s">&quot;/user/login&quot;</span><span class="g">&gt;</span>login<span class="g">&lt;/</span><span class="k">a</span><span class="g">&gt;</span></span></div><div class="ln " style="top:270px"><div class="abs" style="left:64.9px;top:0;width:426.1px;height:18px;border:2px solid #282828;border-right:none"></div><span class="num cur" style="left:-0.10000000000000142px">16</span><span class="tx" style="left:64.9px"><span class="g">&lt;/</span><span class="k">div</span><span class="g">&gt;</span></span></div><div class="abs" style="left:491px;top:0;width:67px;height:328px;background:#1f1f1f;box-shadow:-4px 0 4px -2px rgba(0,0,0,.7)"><div class="abs" style="left:4px;top:0"><div style="width:63px;height:328px;overflow:hidden;font-family:'Liberation Mono',monospace;font-size:1.6665px;line-height:2px;white-space:pre;padding-top:.5px;font-weight:700;opacity:0.78;-webkit-text-stroke:0.1px;letter-spacing:0"><div style="height:2px"><span style="color:#808080">&lt;</span><span style="color:#569cd6">p</span><span style="color:#808080">&gt;</span><span style="color:#cccccc">navigation</span> <span style="color:#cccccc">works!</span><span style="color:#808080">&lt;/</span><span style="color:#cccccc">p</span><span style="color:#808080">&gt;</span></div><div style="height:2px"></div><div style="height:2px"><span style="color:#808080">&lt;</span><span style="color:#569cd6">div</span><span style="color:#808080">&gt;</span></div><div style="height:2px">    <span style="color:#808080">&lt;</span><span style="color:#569cd6">a</span> <span style="color:#9cdcfe">routerLink</span><span style="color:#808080">=</span><span style="color:#ce9178">&quot;/home&quot;</span><span style="color:#808080">&gt;</span><span style="color:#cccccc">home</span><span style="color:#808080">&lt;/</span><span style="color:#cccccc">a</span><span style="color:#808080">&gt;</span></div><div style="height:2px">    <span style="color:#808080">&lt;</span><span style="color:#569cd6">br</span><span style="color:#808080">&gt;</span></div><div style="height:2px">    <span style="color:#808080">&lt;</span><span style="color:#cccccc">!</span><span style="color:#cccccc">--</span> <span style="color:#808080">&lt;</span><span style="color:#569cd6">a</span> <span style="color:#9cdcfe">routerLink</span><span style="color:#808080">=</span><span style="color:#ce9178">&quot;/about&quot;</span> <span style="color:#9cdcfe">[queryParams]</span><span style="color:#808080">=</span><span style="color:#ce9178">&quot;{ name: &#x27;sam&#x27; }&quot;</span></div><div style="height:2px">    <span style="color:#808080">&lt;</span><span style="color:#569cd6">a</span> <span style="color:#9cdcfe">[routerLink]</span><span style="color:#808080">=</span><span style="color:#ce9178">&quot;[&#x27;/about&#x27;,&#x27;joe&#x27;]&quot;</span><span style="color:#808080">&gt;</span><span style="color:#cccccc">about</span><span style="color:#808080">&lt;/</span><span style="color:#cccccc">a</span><span style="color:#808080">&gt;</span></div><div style="height:2px">    <span style="color:#808080">&lt;</span><span style="color:#569cd6">br</span><span style="color:#808080">&gt;</span></div><div style="height:2px">    <span style="color:#6a9955">&lt;!-- &lt;a routerLink=&quot;/news&quot;&gt;News&lt;/a&gt; --&gt;</span></div><div style="height:2px">    <span style="color:#808080">&lt;</span><span style="color:#569cd6">a</span> <span style="color:#9cdcfe">[routerLink]</span><span style="color:#808080">=</span><span style="color:#cccccc">&quot;[&#x27;/</span><span style="color:#cccccc">news</span><span style="color:#cccccc">&#x27;,</span> <span style="color:#cccccc">{</span><span style="color:#cccccc">outlets</span><span style="color:#cccccc">:</span> <span style="color:#cccccc">{</span></div><div style="height:2px">        <span style="color:#cccccc">left</span><span style="color:#cccccc">:</span> <span style="color:#cccccc">[&#x27;</span><span style="color:#cccccc">company</span><span style="color:#cccccc">&#x27;],</span></div><div style="height:2px">        <span style="color:#cccccc">right</span><span style="color:#cccccc">:</span> <span style="color:#cccccc">[&#x27;</span><span style="color:#cccccc">industry</span><span style="color:#cccccc">&#x27;]</span></div><div style="height:2px">     <span style="color:#cccccc">}</span> <span style="color:#cccccc">}]&quot;&gt;</span><span style="color:#cccccc">News</span><span style="color:#808080">&lt;/</span><span style="color:#cccccc">a</span><span style="color:#808080">&gt;</span></div><div style="height:2px">    <span style="color:#808080">&lt;</span><span style="color:#569cd6">br</span><span style="color:#808080">&gt;</span></div><div style="height:2px">    <span style="color:#808080">&lt;</span><span style="color:#569cd6">a</span> <span style="color:#9cdcfe">routerLink</span><span style="color:#808080">=</span><span style="color:#ce9178">&quot;/user/login&quot;</span><span style="color:#808080">&gt;</span><span style="color:#cccccc">login</span><span style="color:#808080">&lt;/</span><span style="color:#cccccc">a</span><span style="color:#808080">&gt;</span></div><div style="height:2px"><span style="color:#808080">&lt;/</span><span style="color:#cccccc">div</span><span style="color:#808080">&gt;</span></div><div style="height:2px"></div></div></div></div><div class="abs" style="left:0;top:0;width:558px;height:4px;background:linear-gradient(rgba(0,0,0,.45),rgba(0,0,0,0))"></div></div><div class="abs" style="left:1578px;top:593px;width:14px;height:328px;border-left:1px solid #2a2a2a"><div class="abs" style="left:0;top:150.85000000000002px;width:14px;height:2px;background:#a0a0a0"></div></div><div class="abs" style="left:509.6px;top:536px;width:1082.4px;height:1px;background:#2b2b2b"></div><div class="abs" style="left:311px;top:921px;width:1281px;height:190px;background:#181818;border-top:1px solid #2b2b2b"><span class="abs nw ptab" data-w="59.5" style="left:20.100000000000023px;top:5.899999999999977px;height:22px;line-height:22px;font-size:11px;color:#9d9d9d;-webkit-text-stroke:.15px"><span style="letter-spacing:-0.205px">PROBLEMS</span></span><span class="abs nw ptab" data-w="45.4" style="left:104px;top:5.899999999999977px;height:22px;line-height:22px;font-size:11px;color:#9d9d9d;-webkit-text-stroke:.15px"><span style="letter-spacing:0.028px">OUTPUT</span></span><span class="abs nw ptab" data-w="94.3" style="left:174px;top:5.899999999999977px;height:22px;line-height:22px;font-size:11px;color:#9d9d9d;-webkit-text-stroke:.15px"><span style="letter-spacing:-0.128px">DEBUG CONSOLE</span></span><span class="abs nw ptab" data-w="64.2" style="left:293px;top:5.899999999999977px;height:22px;line-height:22px;font-size:11px;color:#9d9d9d;-webkit-text-stroke:.15px"><span style="letter-spacing:0.004px">COMMENTS</span></span><span class="abs nw ptab" data-w="36.4" style="left:381.79999999999995px;top:5.899999999999977px;height:22px;line-height:22px;font-size:11px;color:#9d9d9d;-webkit-text-stroke:.15px"><span style="letter-spacing:-0.261px">PORTS</span></span><span class="abs nw ptab" data-w="54.9" style="left:442.79999999999995px;top:5.899999999999977px;height:22px;line-height:22px;font-size:11px;color:#ccc;-webkit-text-stroke:.15px"><span style="letter-spacing:-0.091px">TERMINAL</span></span><div class="abs" style="left:440.5px;top:27.5px;width:59.5px;height:1px;background:#0078d4"></div><div class="abs" style="left:1158.4px;top:8.899999999999977px"><svg xmlns="http://www.w3.org/2000/svg" viewBox="0 0 16 16" width="16" height="16" style="display:block;color:#ccc;"><path d="M8 2.5V13.5M2.5 8H13.5" fill="none" stroke="currentColor" stroke-width="1.05" /></svg></div><div class="abs" style="left:1197.8px;top:8.899999999999977px"><svg xmlns="http://www.w3.org/2000/svg" viewBox="0 0 16 16" width="16" height="16" style="display:block;color:#ccc;"><circle cx="3" cy="8" r="1.05" fill="currentColor"/><circle cx="8" cy="8" r="1.05" fill="currentColor"/><circle cx="13" cy="8" r="1.05" fill="currentColor"/></svg></div><div class="abs" style="left:1224px;top:8.899999999999977px"><svg xmlns="http://www.w3.org/2000/svg" viewBox="0 0 16 16" width="16" height="16" style="display:block;color:#ccc;"><path d="M3 10.2L8 5.2L13 10.2" fill="none" stroke="currentColor" stroke-width="1.05" /></svg></div><div class="abs" style="left:1250px;top:8.899999999999977px"><svg xmlns="http://www.w3.org/2000/svg" viewBox="0 0 16 16" width="16" height="16" style="display:block;color:#ccc;"><path d="M3.8 3.8L12.2 12.2M12.2 3.8L3.8 12.2" fill="none" stroke="currentColor" stroke-width="1.05" /></svg></div><div class="abs" style="left:1177.5px;top:12.299999999999955px"><svg xmlns="http://www.w3.org/2000/svg" viewBox="0 0 16 16" width="11" height="11" style=display:block;color:#ccc><path d="M3 5.8L8 10.8L13 5.8" fill="none" stroke="currentColor" stroke-width="1.5" /></svg></div><div class="abs mono nw" style="left:20.099999999999987px;top:35.30000000000005px;font-size:12px;line-height:14px;letter-spacing:-0.2px;color:#ccc;-webkit-text-stroke:.18px;transform:translateY(.5px)"><div style="height:14px"><span style="color:#11a8cd;">UPDATE</span> src/app/app.module.ts (4488 bytes)</div><div style="height:14px"><svg xmlns="http://www.w3.org/2000/svg" width="7" height="14" viewBox="0 0 7 14" style="display:inline-block;vertical-align:top"><path d="M0.2 6.4H4.2V4.4L6.95 7L4.2 9.6V7.6H0.2Z" fill="#23d18b" stroke="#23d18b" stroke-width=".3" stroke-linejoin="round"/></svg>  <span style="color:#29b8db;font-weight:700;">angular-study</span> <span style="color:#3b8eea;font-weight:700;">git:(</span><span style="color:#f14c4c;font-weight:700;">main</span><span style="color:#3b8eea;font-weight:700;">)</span> <svg xmlns="http://www.w3.org/2000/svg" width="7" height="14" viewBox="0 0 7 14" style="display:inline-block;vertical-align:top"><path d="M0.7 10.8L6.0 4.4M2.3 5.2L4.9 9.6" fill="none" stroke="#f5f543" stroke-width="1.5" stroke-linecap="round"/></svg> ng g m components/route/user --routing=true</div><div style="height:14px"><span style="color:#0dbc79;">CREATE</span> src/app/components/route/user/user-routing.module.ts (247 bytes)</div><div style="height:14px"><span style="color:#0dbc79;">CREATE</span> src/app/components/route/user/user.module.ts (272 bytes)</div><div style="height:14px"><svg xmlns="http://www.w3.org/2000/svg" width="7" height="14" viewBox="0 0 7 14" style="display:inline-block;vertical-align:top"><path d="M0.2 6.4H4.2V4.4L6.95 7L4.2 9.6V7.6H0.2Z" fill="#23d18b" stroke="#23d18b" stroke-width=".3" stroke-linejoin="round"/></svg>  <span style="color:#29b8db;font-weight:700;">angular-study</span> <span style="color:#3b8eea;font-weight:700;">git:(</span><span style="color:#f14c4c;font-weight:700;">main</span><span style="color:#3b8eea;font-weight:700;">)</span> <svg xmlns="http://www.w3.org/2000/svg" width="7" height="14" viewBox="0 0 7 14" style="display:inline-block;vertical-align:top"><path d="M0.7 10.8L6.0 4.4M2.3 5.2L4.9 9.6" fill="none" stroke="#f5f543" stroke-width="1.5" stroke-linecap="round"/></svg> ng g c components/route/user/pages/login</div><div style="height:14px"><span style="color:#0dbc79;">CREATE</span> src/app/components/route/user/pages/login/login.component.css (0 bytes)</div><div style="height:14px"><span style="color:#0dbc79;">CREATE</span> src/app/components/route/user/pages/login/login.component.html (20 bytes)</div><div style="height:14px"><span style="color:#0dbc79;">CREATE</span> src/app/components/route/user/pages/login/login.component.spec.ts (592 bytes)</div><div style="height:14px"><span style="color:#0dbc79;">CREATE</span> src/app/components/route/user/pages/login/login.component.ts (271 bytes)</div><div style="height:14px"><span style="color:#11a8cd;">UPDATE</span> src/app/components/route/user/user.module.ts (358 bytes)</div><div style="height:14px"><svg xmlns="http://www.w3.org/2000/svg" width="7" height="14" viewBox="0 0 7 14" style="display:inline-block;vertical-align:top"><path d="M0.2 6.4H4.2V4.4L6.95 7L4.2 9.6V7.6H0.2Z" fill="#23d18b" stroke="#23d18b" stroke-width=".3" stroke-linejoin="round"/></svg>  <span style="color:#29b8db;font-weight:700;">angular-study</span> <span style="color:#3b8eea;font-weight:700;">git:(</span><span style="color:#f14c4c;font-weight:700;">main</span><span style="color:#3b8eea;font-weight:700;">)</span> <svg xmlns="http://www.w3.org/2000/svg" width="7" height="14" viewBox="0 0 7 14" style="display:inline-block;vertical-align:top"><path d="M0.7 10.8L6.0 4.4M2.3 5.2L4.9 9.6" fill="none" stroke="#f5f543" stroke-width="1.5" stroke-linecap="round"/></svg> <span style="display:inline-block;width:6.6px;height:13px;border:1px solid #ccc;vertical-align:-2px;box-sizing:border-box;margin-left:.2px"></span></div></div><div class="abs" style="left:7.000000000000023px;top:51.600000000000044px;width:8.2px;height:8.2px;border-radius:50%;background:#1b81a8"></div><div class="abs" style="left:7.000000000000023px;top:93.60000000000005px;width:8.2px;height:8.2px;border-radius:50%;background:#1b81a8"></div><div class="abs" style="left:7.000000000000023px;top:177.60000000000005px;width:8.2px;height:8.2px;border-radius:50%;border:1.3px solid #6c6c6c"></div><div class="abs" style="left:1053.2px;top:34.799999999999955px;width:14px;height:154.20000000000005px;background:#141414;border-top:1px solid #0c0c0c;border-left:1px solid #101010"><div class="abs" style="left:-1px;top:-1.0px;width:4.6px;height:4.6px;background:#1b81a8"></div><div class="abs" style="left:-1px;top:21.9px;width:4.6px;height:8.7px;background:#1b81a8"></div><div class="abs" style="left:-1px;top:48.9px;width:4.6px;height:8.6px;background:#1b81a8"></div><div class="abs" style="left:-1px;top:76.2px;width:4.6px;height:8.8px;background:#1b81a8"></div><div class="abs" style="left:-1px;top:103.3px;width:4.6px;height:8.7px;background:#1b81a8"></div><div class="abs" style="left:-1px;top:116.8px;width:4.6px;height:8.6px;background:#1b81a8"></div><div class="abs" style="left:-1px;top:143.7px;width:4.6px;height:8.7px;background:#4f4f4f"></div></div><div class="abs" style="left:1067.3px;top:34.39999999999998px;width:213.70000000000005px;height:154.60000000000002px;border-left:1px solid #2b2b2b"><div class="abs" style="left:9.700000000000045px;top:3px"><svg xmlns="http://www.w3.org/2000/svg" viewBox="0 0 16 16" width="16" height="16" style="display:block;color:#ccc;"><rect x="1.5" y="1.5" width="13" height="13" rx="1.2" fill="none" stroke="currentColor" stroke-width="1.05"/><path d="M4.3 5.2L7.3 8L4.3 10.8" fill="none" stroke="currentColor" stroke-width="1.05" /><path d="M8.3 11H11.6" fill="none" stroke="currentColor" stroke-width="1.05" /></svg></div><div class="abs nw ui" style="left:29.799999999999955px;top:0.7px;height:22px;line-height:22px;color:#ccc"><span style="letter-spacing:0.12px">node</span></div><div class="abs" style="left:9.700000000000045px;top:25px"><svg xmlns="http://www.w3.org/2000/svg" viewBox="0 0 16 16" width="16" height="16" style="display:block;color:#ccc;"><rect x="1.5" y="1.5" width="13" height="13" rx="1.2" fill="none" stroke="currentColor" stroke-width="1.05"/><path d="M4.3 5.2L7.3 8L4.3 10.8" fill="none" stroke="currentColor" stroke-width="1.05" /><path d="M8.3 11H11.6" fill="none" stroke="currentColor" stroke-width="1.05" /></svg></div><div class="abs nw ui" style="left:29.799999999999955px;top:22.7px;height:22px;line-height:22px;color:#ccc"><span style="letter-spacing:-0.011px">zsh</span></div><div class="abs" style="left:0;top:22px;width:1px;height:22px;background:#0078d4"></div></div></div><div class="abs" style="left:48px;top:35px;width:263px;height:1076px;background:#181818;border-right:1px solid #2b2b2b;overflow:hidden"><div class="abs nw" style="left:20.2px;top:0;height:35px;line-height:35px;font-size:11px;color:#ccc;-webkit-text-stroke:.15px"><span style="letter-spacing:-0.503px">EXPLORER</span></div><div class="abs" style="left:230.9px;top:9.5px"><svg xmlns="http://www.w3.org/2000/svg" viewBox="0 0 16 16" width="16" height="16" style="display:block;color:#ccc;"><circle cx="3" cy="8" r="1.05" fill="currentColor"/><circle cx="8" cy="8" r="1.05" fill="currentColor"/><circle cx="13" cy="8" r="1.05" fill="currentColor"/></svg></div><div class="hdr" style="top:35px"><span class="abs" style="left:2.2px;top:3px"><svg xmlns="http://www.w3.org/2000/svg" viewBox="0 0 16 16" width="16" height="16" style="display:block;color:#ccc;"><path d="M3 5.8L8 10.8L13 5.8" fill="none" stroke="currentColor" stroke-width="1.05" /></svg></span><span class="abs" style="left:20.4px"><span style="letter-spacing:0.047px">OPEN EDITORS</span></span></div><div class="hdr" style="top:57px"><span class="abs" style="left:22.2px"><span style="letter-spacing:-0.102px">GROUP 1</span></span></div><div class="row" style="top:79px;"><span class="fi" style="left:41.8px;color:#519aba;font-size:11.2px;">TS</span><span class="lbl" style="left:64.2px"><span style="letter-spacing:0.421px">app-routing.module.ts</span><span class="desc" style="margin-left:6.3px"><span style="letter-spacing:0.367px">src/app</span></span></span></div><div class="hdr" style="top:101px"><span class="abs" style="left:22.2px"><span style="letter-spacing:0.113px">GROUP 2</span></span></div><div class="row" style="top:123px;background:#2f2f35;"><span class="ico" style="left:23.799999999999997px"><svg xmlns="http://www.w3.org/2000/svg" viewBox="0 0 16 16" width="16" height="16" style="display:block;color:#ccc;"><path d="M3.8 3.8L12.2 12.2M12.2 3.8L3.8 12.2" fill="none" stroke="currentColor" stroke-width="1.05" /></svg></span><span class="fi" style="left:41.8px;color:#519aba;font-size:11.2px;">TS</span><span class="lbl" style="left:64.2px"><span style="letter-spacing:0.371px">user-routing.module.ts</span><span class="desc" style="margin-left:6.3px"><span style="letter-spacing:0.302px">src/app...</span></span></span></div><div class="hdr" style="top:145px"><span class="abs" style="left:22.2px"><span style="letter-spacing:0.17px">GROUP 3</span></span></div><div class="row" style="top:167px;"><span class="ico" style="left:43.8px;top:4px;margin-left:1px"><svg xmlns="http://www.w3.org/2000/svg" viewBox="0 0 16 16" width="14" height="14" style="display:block;color:#e37933;"><path d="M6.2 4L2.6 8L6.2 12M9.8 4L13.4 8L9.8 12" fill="none" stroke="currentColor" stroke-width="1.35" /></svg></span><span class="lbl" style="left:64.2px"><span style="letter-spacing:0.341px">navigation.component.html</span><span class="desc" style="margin-left:6.3px"><span style="letter-spacing:0.171px">sr...</span></span></span></div><div class="abs" style="left:0;top:189px;width:262px;height:1px;background:#2b2b2b"></div><div class="hdr" style="top:189px"><span class="abs" style="left:2.2px;top:3px"><svg xmlns="http://www.w3.org/2000/svg" viewBox="0 0 16 16" width="16" height="16" style="display:block;color:#ccc;"><path d="M3 5.8L8 10.8L13 5.8" fill="none" stroke="currentColor" stroke-width="1.05" /></svg></span><span class="abs" style="left:20.4px"><span style="letter-spacing:0.25px">ANGULAR-STUDY</span></span></div><div class="abs" style="left:0;top:211px;width:262px;height:821.5px;overflow:hidden"><div class="row" style="top:97px;"><span class="ico" style="left:46.9px"><svg xmlns="http://www.w3.org/2000/svg" viewBox="0 0 16 16" width="16" height="16" style="display:block;color:#ccc;"><path d="M3 5.8L8 10.8L13 5.8" fill="none" stroke="currentColor" stroke-width="1.05" /></svg></span><span class="lbl" style="left:66.3px"><span style="letter-spacing:0.232px">navigation</span></span></div><div class="row" style="top:119px;"><span class="fi" style="left:51.9px;color:#519aba;font-size:13.8px;transform:scaleX(1.12) skewX(-7deg);-webkit-text-stroke:.45px;">#</span><span class="lbl" style="left:74.3px"><span style="letter-spacing:0.304px">navigation.component.css</span></span></div><div class="row" style="top:141px;"><span class="ico" style="left:53.9px;top:4px;margin-left:1px"><svg xmlns="http://www.w3.org/2000/svg" viewBox="0 0 16 16" width="14" height="14" style="display:block;color:#e37933;"><path d="M6.2 4L2.6 8L6.2 12M9.8 4L13.4 8L9.8 12" fill="none" stroke="currentColor" stroke-width="1.35" /></svg></span><span class="lbl" style="left:74.3px"><span style="letter-spacing:0.341px">navigation.component.html</span></span></div><div class="row" style="top:163px;"><span class="fi" style="left:51.9px;color:#e37933;font-size:11.2px;">TS</span><span class="lbl" style="left:74.3px"><span style="letter-spacing:0.321px">navigation.component.spec.ts</span></span></div><div class="row" style="top:185px;"><span class="fi" style="left:51.9px;color:#519aba;font-size:11.2px;">TS</span><span class="lbl" style="left:74.3px"><span style="letter-spacing:0.311px">navigation.component.ts</span></span></div><div class="row" style="top:207px;"><span class="ico" style="left:46.9px"><svg xmlns="http://www.w3.org/2000/svg" viewBox="0 0 16 16" width="16" height="16" style="display:block;color:#ccc;"><path d="M5.8 3L10.8 8L5.8 13" fill="none" stroke="currentColor" stroke-width="1.05" /></svg></span><span class="lbl" style="left:66.3px"><span style="letter-spacing:0.06px">news</span></span></div><div class="row" style="top:229px;"><span class="ico" style="left:46.9px"><svg xmlns="http://www.w3.org/2000/svg" viewBox="0 0 16 16" width="16" height="16" style="display:block;color:#ccc;"><path d="M5.8 3L10.8 8L5.8 13" fill="none" stroke="currentColor" stroke-width="1.05" /></svg></span><span class="lbl" style="left:66.3px"><span style="letter-spacing:0.496px">not-found</span></span></div><div class="row" style="top:251px;"><span class="ico" style="left:46.9px"><svg xmlns="http://www.w3.org/2000/svg" viewBox="0 0 16 16" width="16" height="16" style="display:block;color:#ccc;"><path d="M5.8 3L10.8 8L5.8 13" fill="none" stroke="currentColor" stroke-width="1.05" /></svg></span><span class="lbl" style="left:66.3px"><span style="letter-spacing:0.42px">route-layout</span></span></div><div class="row" style="top:273px;"><span class="ico" style="left:46.9px"><svg xmlns="http://www.w3.org/2000/svg" viewBox="0 0 16 16" width="16" height="16" style="display:block;color:#ccc;"><path d="M3 5.8L8 10.8L13 5.8" fill="none" stroke="currentColor" stroke-width="1.05" /></svg></span><span class="lbl" style="left:66.3px"><span style="letter-spacing:0.126px">user</span></span></div><div class="row" style="top:295px;"><span class="ico" style="left:54.9px"><svg xmlns="http://www.w3.org/2000/svg" viewBox="0 0 16 16" width="16" height="16" style="display:block;color:#ccc;"><path d="M3 5.8L8 10.8L13 5.8" fill="none" stroke="currentColor" stroke-width="1.05" /></svg></span><span class="lbl" style="left:74.3px"><span style="letter-spacing:0.116px">pages</span><span style="color:#8a8a8a;margin:0 2.4px 0 2.2px;letter-spacing:0">/</span><span style="letter-spacing:0.256px">login</span></span></div><div class="row" style="top:317px;"><span class="fi" style="left:59.89999999999999px;color:#519aba;font-size:13.8px;transform:scaleX(1.12) skewX(-7deg);-webkit-text-stroke:.45px;">#</span><span class="lbl" style="left:82.3px"><span style="letter-spacing:0.331px">login.component.css</span></span></div><div class="row" style="top:339px;"><span class="ico" style="left:61.89999999999999px;top:4px;margin-left:1px"><svg xmlns="http://www.w3.org/2000/svg" viewBox="0 0 16 16" width="14" height="14" style="display:block;color:#e37933;"><path d="M6.2 4L2.6 8L6.2 12M9.8 4L13.4 8L9.8 12" fill="none" stroke="currentColor" stroke-width="1.35" /></svg></span><span class="lbl" style="left:82.3px"><span style="letter-spacing:0.366px">login.component.html</span></span></div><div class="row" style="top:361px;"><span class="fi" style="left:59.89999999999999px;color:#e37933;font-size:11.2px;">TS</span><span class="lbl" style="left:82.3px"><span style="letter-spacing:0.343px">login.component.spec.ts</span></span></div><div class="row" style="top:383px;"><span class="fi" style="left:59.89999999999999px;color:#519aba;font-size:11.2px;">TS</span><span class="lbl" style="left:82.3px"><span style="letter-spacing:0.343px">login.component.ts</span></span></div><div class="row" style="top:405px;background:#2f2f35;"><span class="fi" style="left:51.9px;color:#519aba;font-size:11.2px;">TS</span><span class="lbl" style="left:74.3px"><span style="letter-spacing:0.371px">user-routing.module.ts</span></span></div><div class="row" style="top:427px;"><span class="fi" style="left:51.9px;color:#519aba;font-size:11.2px;">TS</span><span class="lbl" style="left:74.3px"><span style="letter-spacing:0.268px">user.module.ts</span></span></div><div class="row" style="top:449px;"><span class="ico" style="left:38.9px"><svg xmlns="http://www.w3.org/2000/svg" viewBox="0 0 16 16" width="16" height="16" style="display:block;color:#ccc;"><path d="M5.8 3L10.8 8L5.8 13" fill="none" stroke="currentColor" stroke-width="1.05" /></svg></span><span class="lbl" style="left:58.3px"><span style="letter-spacing:0.12px">rxjs</span></span></div><div class="row" style="top:471px;"><span class="ico" style="left:30.9px"><svg xmlns="http://www.w3.org/2000/svg" viewBox="0 0 16 16" width="16" height="16" style="display:block;color:#ccc;"><path d="M5.8 3L10.8 8L5.8 13" fill="none" stroke="currentColor" stroke-width="1.05" /></svg></span><span class="lbl" style="left:50.3px"><span style="letter-spacing:0.142px">shared</span></span></div><div class="row" style="top:493px;"><span class="fi" style="left:27.9px;color:#519aba;font-size:11.2px;">TS</span><span class="lbl" style="left:50.3px"><span style="letter-spacing:0.421px">app-routing.module.ts</span></span></div><div class="row" style="top:515px;"><span class="fi" style="left:27.9px;color:#519aba;font-size:13.8px;transform:scaleX(1.12) skewX(-7deg);-webkit-text-stroke:.45px;">#</span><span class="lbl" style="left:50.3px"><span style="letter-spacing:0.322px">app.component.css</span></span></div><div class="row" style="top:537px;"><span class="ico" style="left:29.9px;top:4px;margin-left:1px"><svg xmlns="http://www.w3.org/2000/svg" viewBox="0 0 16 16" width="14" height="14" style="display:block;color:#e37933;"><path d="M6.2 4L2.6 8L6.2 12M9.8 4L13.4 8L9.8 12" fill="none" stroke="currentColor" stroke-width="1.35" /></svg></span><span class="lbl" style="left:50.3px"><span style="letter-spacing:0.389px">app.component.html</span></span></div><div class="row" style="top:559px;"><span class="fi" style="left:27.9px;color:#e37933;font-size:11.2px;">TS</span><span class="lbl" style="left:50.3px"><span style="letter-spacing:0.366px">app.component.spec.ts</span></span></div><div class="row" style="top:581px;"><span class="fi" style="left:27.9px;color:#519aba;font-size:11.2px;">TS</span><span class="lbl" style="left:50.3px"><span style="letter-spacing:0.353px">app.component.ts</span></span></div><div class="row" style="top:603px;"><span class="fi" style="left:27.9px;color:#519aba;font-size:11.2px;">TS</span><span class="lbl" style="left:50.3px"><span style="letter-spacing:0.31px">app.module.ts</span></span></div><div class="row" style="top:625px;"><span class="ico" style="left:22.9px"><svg xmlns="http://www.w3.org/2000/svg" viewBox="0 0 16 16" width="16" height="16" style="display:block;color:#ccc;"><path d="M5.8 3L10.8 8L5.8 13" fill="none" stroke="currentColor" stroke-width="1.05" /></svg></span><span class="lbl" style="left:42.3px"><span style="letter-spacing:0.104px">assets</span></span></div><div class="row" style="top:647px;"><span class="ico" style="left:22.9px"><svg xmlns="http://www.w3.org/2000/svg" viewBox="0 0 16 16" width="16" height="16" style="display:block;color:#ccc;"><path d="M5.8 3L10.8 8L5.8 13" fill="none" stroke="currentColor" stroke-width="1.05" /></svg></span><span class="lbl" style="left:42.3px"><span style="letter-spacing:0.271px">environments</span></span></div><div class="row" style="top:669px;"><span class="ico" style="left:22.7px;top:3.6px"><svg xmlns="http://www.w3.org/2000/svg" viewBox="0 0 16 16" width="13.6" height="13.6" style="display:block;color:#cbcb41;"><path fill="currentColor" d="M8 1.2L10.1 5.9L15.2 6.4L11.4 9.8L12.5 14.8L8 12.2L3.5 14.8L4.6 9.8L0.8 6.4L5.9 5.9Z"/></svg></span><span class="lbl" style="left:42.3px"><span style="letter-spacing:0.298px">favicon.ico</span></span></div><div class="row" style="top:691px;"><span class="ico" style="left:21.9px;top:4px;margin-left:1px"><svg xmlns="http://www.w3.org/2000/svg" viewBox="0 0 16 16" width="14" height="14" style="display:block;color:#e37933;"><path d="M6.2 4L2.6 8L6.2 12M9.8 4L13.4 8L9.8 12" fill="none" stroke="currentColor" stroke-width="1.35" /></svg></span><span class="lbl" style="left:42.3px"><span style="letter-spacing:0.275px">index.html</span></span></div><div class="row" style="top:713px;"><span class="fi" style="left:19.9px;color:#519aba;font-size:11.2px;">TS</span><span class="lbl" style="left:42.3px"><span style="letter-spacing:0.171px">main.ts</span></span></div><div class="row" style="top:735px;"><span class="fi" style="left:19.9px;color:#519aba;font-size:11.2px;">TS</span><span class="lbl" style="left:42.3px"><span style="letter-spacing:0.378px">polyfills.ts</span></span></div><div class="row" style="top:757px;"><span class="fi" style="left:19.9px;color:#519aba;font-size:13.8px;transform:scaleX(1.12) skewX(-7deg);-webkit-text-stroke:.45px;">#</span><span class="lbl" style="left:42.3px"><span style="letter-spacing:0.246px">styles.css</span></span></div><div class="row" style="top:779px;"><span class="fi" style="left:19.9px;color:#519aba;font-size:11.2px;">TS</span><span class="lbl" style="left:42.3px"><span style="letter-spacing:0.359px">test.ts</span></span></div><div class="row" style="top:801px;"><svg xmlns="http://www.w3.org/2000/svg" width="10" height="12" viewBox="0 0 10 12" style="position:absolute;left:19.4px;top:5.6px"><path d="M0 1.3H8.3M0 3.93H6.1M0 6.56H8.3M0 9.19H6.5" stroke="#d4d7d6" stroke-width="1.15" fill="none"/></svg><span class="lbl" style="left:34.3px"><span style="letter-spacing:0.308px">.browserslistrc</span></span></div><div class="row" style="top:75px;"><span class="ico" style="left:46.9px"><svg xmlns="http://www.w3.org/2000/svg" viewBox="0 0 16 16" width="16" height="16" style="display:block;color:#ccc;"><path d="M5.8 3L10.8 8L5.8 13" fill="none" stroke="currentColor" stroke-width="1.05" /></svg></span><span class="lbl" style="left:66.3px"><span style="letter-spacing:0.246px">industry</span></span></div><div class="abs" style="left:52.2px;top:295px;width:1px;height:154px;background:#585858"></div><div class="abs" style="left:0;top:0;width:262px;height:88px;background:#181818;box-shadow:0 3px 4px -1px rgba(0,0,0,.6)"><div class="row" style="top:0px;"><span class="ico" style="left:14.899999999999999px"><svg xmlns="http://www.w3.org/2000/svg" viewBox="0 0 16 16" width="16" height="16" style="display:block;color:#ccc;"><path d="M3 5.8L8 10.8L13 5.8" fill="none" stroke="currentColor" stroke-width="1.05" /></svg></span><span class="lbl" style="left:34.3px"><span style="letter-spacing:0.202px">src</span></span></div><div class="row" style="top:22px;"><span class="ico" style="left:22.9px"><svg xmlns="http://www.w3.org/2000/svg" viewBox="0 0 16 16" width="16" height="16" style="display:block;color:#ccc;"><path d="M3 5.8L8 10.8L13 5.8" fill="none" stroke="currentColor" stroke-width="1.05" /></svg></span><span class="lbl" style="left:42.3px"><span style="letter-spacing:0.066px">app</span></span></div><div class="row" style="top:44px;"><span class="ico" style="left:30.9px"><svg xmlns="http://www.w3.org/2000/svg" viewBox="0 0 16 16" width="16" height="16" style="display:block;color:#ccc;"><path d="M3 5.8L8 10.8L13 5.8" fill="none" stroke="currentColor" stroke-width="1.05" /></svg></span><span class="lbl" style="left:50.3px"><span style="letter-spacing:0.347px">components</span></span></div><div class="row" style="top:66px;"><span class="ico" style="left:38.9px"><svg xmlns="http://www.w3.org/2000/svg" viewBox="0 0 16 16" width="16" height="16" style="display:block;color:#ccc;"><path d="M3 5.8L8 10.8L13 5.8" fill="none" stroke="currentColor" stroke-width="1.05" /></svg></span><span class="lbl" style="left:58.3px"><span style="letter-spacing:0.252px">route</span></span></div></div></div><div class="abs" style="left:0;top:1032px;width:262px;height:1px;background:#2b2b2b"></div><div class="hdr" style="top:1032px"><span class="abs" style="left:2.2px;top:3px"><svg xmlns="http://www.w3.org/2000/svg" viewBox="0 0 16 16" width="16" height="16" style="display:block;color:#ccc;"><path d="M5.8 3L10.8 8L5.8 13" fill="none" stroke="currentColor" stroke-width="1.05" /></svg></span><span class="abs" style="left:20.4px"><span style="letter-spacing:0.146px">OUTLINE</span></span></div><div class="abs" style="left:0;top:1054px;width:262px;height:1px;background:#2b2b2b"></div><div class="hdr" style="top:1054px"><span class="abs" style="left:2.2px;top:3px"><svg xmlns="http://www.w3.org/2000/svg" viewBox="0 0 16 16" width="16" height="16" style="display:block;color:#ccc;"><path d="M5.8 3L10.8 8L5.8 13" fill="none" stroke="currentColor" stroke-width="1.05" /></svg></span><span class="abs" style="left:20.4px"><span style="letter-spacing:0.145px">TIMELINE</span></span></div></div><div class="abs" style="left:0;top:35px;width:48px;height:1076px;background:#181818;border-right:1px solid #2b2b2b"><div class="abs" style="left:0;top:0;width:2px;height:48px;background:#0078d4"></div><div class="abs" style="left:12px;top:12px"><svg xmlns="http://www.w3.org/2000/svg" viewBox="0 0 24 24" width="24" height="24" style="display:block;color:#d7d7d7;"><path fill="currentColor" d="M17.5 0h-9L7 1.5V6H2.5L1 7.5v15.07L2.5 24h12.07L16 22.57V18h4.7l1.3-1.43V4.5L17.5 0zm0 2.12l2.38 2.38H17.5V2.12zm-3 20.38h-12v-15H7v9.07L8.5 18h6v4.5zm6-6h-12v-15H16V6h4.5v10.5z"/></svg></div><div class="abs" style="left:12px;top:60px"><svg xmlns="http://www.w3.org/2000/svg" viewBox="0 0 24 24" width="24" height="24" style="display:block;color:#868686;"><path fill="currentColor" d="M15.25 0a8.25 8.25 0 0 0-6.18 13.72L1 22.88l1.12 1.12 8.05-9.12A8.251 8.251 0 1 0 15.25.01V0zm0 15a6.75 6.75 0 1 1 0-13.5 6.75 6.75 0 0 1 0 13.5z"/></svg></div><div class="abs" style="left:12px;top:108px"><svg xmlns="http://www.w3.org/2000/svg" viewBox="0 0 24 24" width="24" height="24" style="display:block;color:#868686;"><path fill="currentColor" d="M21.007 8.222A3.738 3.738 0 0 0 15.045 5.2a3.737 3.737 0 0 0 1.156 6.583 2.988 2.988 0 0 1-2.668 1.67h-2.99a4.456 4.456 0 0 0-2.989 1.165V7.4a3.737 3.737 0 1 0-1.494 0v9.117a3.776 3.776 0 1 0 1.816.099 2.99 2.99 0 0 1 2.668-1.667h2.99a4.484 4.484 0 0 0 4.223-3.039 3.736 3.736 0 0 0 3.25-3.687zM4.565 3.738a2.242 2.242 0 1 1 4.484 0 2.242 2.242 0 0 1-4.484 0zm4.484 16.441a2.242 2.242 0 1 1-4.484 0 2.242 2.242 0 0 1 4.484 0zm8.221-9.715a2.242 2.242 0 1 1 0-4.485 2.242 2.242 0 0 1 0 4.485z"/></svg></div><div class="abs" style="left:12px;top:156px"><svg xmlns="http://www.w3.org/2000/svg" viewBox="0 0 24 24" width="24" height="24" style="display:block;color:#868686;"><path fill="currentColor" d="M10.94 13.5l-1.32 1.32a3.73 3.73 0 0 0-7.24 0L1.06 13.5 0 14.56l1.72 1.72-.22.22V18H0v1.5h1.5v.08c.077.489.214.966.41 1.42L0 22.94 1.06 24l1.65-1.65A4.308 4.308 0 0 0 6 24a4.31 4.31 0 0 0 3.29-1.65L10.94 24 12 22.94 10.09 21c.198-.464.336-.951.41-1.45v-.1H12V18h-1.5v-1.5l-.22-.22L12 14.56l-1.06-1.06zM6 13.5a2.25 2.25 0 0 1 2.25 2.25h-4.5A2.25 2.25 0 0 1 6 13.5zm3 6a3.33 3.33 0 0 1-3 3 3.33 3.33 0 0 1-3-3v-2.25h6v2.25zm14.76-9.9v1.26L13.5 17.37V15.6l8.5-5.37L9 2v9.46a5.07 5.07 0 0 0-1.5-.72V.63L8.64 0l15.12 9.6z"/></svg></div><div class="abs" style="left:12px;top:204px"><svg xmlns="http://www.w3.org/2000/svg" viewBox="0 0 24 24" width="24" height="24" style="display:block;color:#868686;"><path fill="currentColor" d="M13.5 1.5L15 0h7.5L24 1.5V9l-1.5 1.5H15L13.5 9V1.5zm1.5 0V9h7.5V1.5H15zM0 15V6l1.5-1.5H9L10.5 6v7.5H18l1.5 1.5v7.5L18 24H1.5L0 22.5V15zm9-1.5V6H1.5v7.5H9zM9 15H1.5v7.5H9V15zm1.5 7.5H18V15h-7.5v7.5z"/></svg></div><div class="abs" style="left:12px;top:252px"><svg xmlns="http://www.w3.org/2000/svg" viewBox="0 0 24 24" width="24" height="24" style="display:block;color:#868686;"><path d="M21.75 10.8V2.85H1.3V18.3H9.8" fill="none" stroke="currentColor" stroke-width="1.5" stroke-linejoin="miter"/><path d="M5.3 21.55H10.7" fill="none" stroke="currentColor" stroke-width="1.3" /><circle cx="17.7" cy="17.7" r="5.55" fill="none" stroke="currentColor" stroke-width="1.5"/><path d="M15.3 16.0L17.0 17.6L15.3 19.2" fill="none" stroke="currentColor" stroke-width="1.0" /><path d="M20.1 16.2L18.4 17.8L20.1 19.4" fill="none" stroke="currentColor" stroke-width="1.0" transform="translate(0,-1.4)"/></svg></div><div class="abs" style="left:12px;top:300px"><svg xmlns="http://www.w3.org/2000/svg" viewBox="0 0 24 24" width="24" height="24" style="display:block;color:#868686;"><rect x="2.10" y="9.30" width="2.3" height="2.1" fill="currentColor"/><rect x="4.91" y="9.30" width="2.3" height="2.1" fill="currentColor"/><rect x="7.72" y="9.30" width="2.3" height="2.1" fill="currentColor"/><rect x="10.53" y="9.30" width="2.3" height="2.1" fill="currentColor"/><rect x="13.34" y="9.30" width="2.3" height="2.1" fill="currentColor"/><rect x="4.91" y="6.60" width="2.3" height="2.1" fill="currentColor"/><rect x="7.72" y="6.60" width="2.3" height="2.1" fill="currentColor"/><rect x="10.53" y="6.60" width="2.3" height="2.1" fill="currentColor"/><rect x="10.53" y="3.90" width="2.3" height="2.1" fill="currentColor"/><path fill="currentColor" d="M0.1 12.1H17.6C18.6 11.3 18.7 9.6 17.9 8.2L18.7 7.5C19.9 8.3 20.4 9.4 20.5 10.3C21.6 9.9 22.9 10.1 23.8 10.7C23.3 12.1 21.9 12.8 20.2 12.7C18.6 17.2 14.6 20.9 8.2 20.9C3.0 20.9 0.0 17.6 0.1 12.1Z"/></svg></div><div class="abs" style="left:12px;top:348px"><svg xmlns="http://www.w3.org/2000/svg" viewBox="0 0 24 24" width="24" height="24" style="display:block;color:#868686;"><circle cx="12" cy="5.35" r="3.3" fill="none" stroke="currentColor" stroke-width="1.4"/><circle cx="5.1" cy="17.3" r="3.3" fill="none" stroke="currentColor" stroke-width="1.4"/><circle cx="18.9" cy="17.3" r="3.3" fill="none" stroke="currentColor" stroke-width="1.4"/><path d="M8.3 6.2A8 8 0 0 0 4.3 11.8" fill="none" stroke="currentColor" stroke-width="1.4" /><path d="M17.0 7.5A8 8 0 0 1 19.8 13.6" fill="none" stroke="currentColor" stroke-width="1.4" /><path d="M8.6 19.4A8 8 0 0 0 14.4 20.3" fill="none" stroke="currentColor" stroke-width="1.4" /></svg></div><div class="abs" style="left:12px;top:396px"><svg xmlns="http://www.w3.org/2000/svg" viewBox="0 0 24 24" width="24" height="24" style="display:block;color:#868686;"><rect x="0" y="7.5" width="6" height="13.4" rx="1.4" fill="currentColor"/><rect x="9" y="3" width="6" height="17.9" rx="1.4" fill="currentColor"/><rect x="18" y="10.5" width="6" height="10.4" rx="1.4" fill="currentColor"/></svg></div><div class="abs" style="left:12px;top:992px"><svg xmlns="http://www.w3.org/2000/svg" viewBox="0 0 24 24" width="24" height="24" style="display:block;color:#868686;"><circle cx="12" cy="12" r="11.25" fill="none" stroke="currentColor" stroke-width="1.5"/><circle cx="12" cy="9.75" r="4.9" fill="none" stroke="currentColor" stroke-width="1.5"/><path d="M4.7 20.2A7.6 7.6 0 0 1 19.3 20.2" fill="none" stroke="currentColor" stroke-width="1.5" /></svg></div><div class="abs" style="left:12px;top:1040px"><svg xmlns="http://www.w3.org/2000/svg" viewBox="0 0 24 24" width="24" height="24" style="display:block;color:#868686;"><path d="M9.73 4.12 L9.98 0.88 L14.02 0.88 L14.27 4.12 L15.97 4.83 L18.43 2.71 L21.29 5.57 L19.17 8.03 L19.88 9.73 L23.12 9.98 L23.12 14.02 L19.88 14.27 L19.17 15.97 L21.29 18.43 L18.43 21.29 L15.97 19.17 L14.27 19.88 L14.02 23.12 L9.98 23.12 L9.73 19.88 L8.03 19.17 L5.57 21.29 L2.71 18.43 L4.83 15.97 L4.12 14.27 L0.88 14.02 L0.88 9.98 L4.12 9.73 L4.83 8.03 L2.71 5.57 L5.57 2.71 L8.03 4.83Z" fill="none" stroke="currentColor" stroke-width="1.5" stroke-linejoin="miter"/><circle cx="12" cy="12" r="2.8" fill="none" stroke="currentColor" stroke-width="1.5"/></svg></div></div><div class="abs" style="left:0;top:0;width:1592px;height:35px;background:#181818;border-bottom:1px solid #2b2b2b"><div class="abs" style="left:11px;top:12px;width:12px;height:12px;border-radius:50%;background:#ff5753"></div><div class="abs" style="left:31px;top:12px;width:12px;height:12px;border-radius:50%;background:#ffb13b"></div><div class="abs" style="left:51px;top:12px;width:12px;height:12px;border-radius:50%;background:#2dbe46"></div><div class="abs" style="left:446.7px;top:9.6px"><svg xmlns="http://www.w3.org/2000/svg" viewBox="0 0 16 16" width="16" height="16" style="display:block;color:#ccc;"><path d="M14 8H2.5M7 3.2L2.2 8L7 12.8" fill="none" stroke="currentColor" stroke-width="1.05" /></svg></div><div class="abs" style="left:472.6px;top:9.6px"><svg xmlns="http://www.w3.org/2000/svg" viewBox="0 0 16 16" width="16" height="16" style="display:block;color:#848484;"><path d="M2 8H13.5M9 3.2L13.8 8L9 12.8" fill="none" stroke="currentColor" stroke-width="1.05" /></svg></div><div class="abs" style="left:501.3px;top:5px;width:602px;height:23.5px;border:1px solid #3e3e3e;border-radius:6px;background:#242424"></div><div class="abs" style="left:755.4px;top:10px"><svg xmlns="http://www.w3.org/2000/svg" viewBox="0 0 16 16" width="14" height="14" style="display:block;color:#ccc;"><circle cx="10" cy="6" r="4.6" fill="none" stroke="currentColor" stroke-width="1.05"/><path d="M6.8 9.4L1.6 14.8" fill="none" stroke="currentColor" stroke-width="1.05" /></svg></div><div class="abs nw" id="tb-title" style="left:774.4px;top:0;height:35px;line-height:34px;font-size:12px;color:#ccc"><span style="letter-spacing:0.414px">angular-study</span></div><div class="abs" style="left:1116.7px;top:8.6px"><svg xmlns="http://www.w3.org/2000/svg" viewBox="0 0 16 16" width="16.2" height="16.2" style="display:block;color:#ccc;"><path fill="currentColor" fill-rule="evenodd" d="M8 1.7C7 0.7 3.5 0.5 2.3 1.9C1.4 3 1.5 5 1.9 6.3C0.9 7.2 0 8.6 0 10.2V11.2C1.2 13.6 4.6 15.4 8 15.4S14.8 13.6 16 11.2V10.2C16 8.6 15.1 7.2 14.1 6.3C14.5 5 14.6 3 13.7 1.9C12.5 0.5 9 0.7 8 1.7ZM3.4 3.4C4.2 2.6 6.3 2.7 6.8 3.5C7.2 4.4 7 6 6.4 6.6C5.6 7.3 3.9 7.2 3.4 6.5C3 5.7 2.9 4 3.4 3.4ZM12.6 3.4C11.8 2.6 9.7 2.7 9.2 3.5C8.8 4.4 9 6 9.6 6.6C10.4 7.3 12.1 7.2 12.6 6.5C13 5.7 13.1 4 12.6 3.4ZM3.2 8.6C4.8 8.9 6.6 8.3 8 7.2C9.4 8.3 11.2 8.9 12.8 8.6V12.4C11.4 13.3 9.7 13.8 8 13.8S4.6 13.3 3.2 12.4ZM6.3 9.3A0.8 0.8 0 0 0 5.5 10.1V11.6A0.8 0.8 0 0 0 7.1 11.6V10.1A0.8 0.8 0 0 0 6.3 9.3ZM9.7 9.3A0.8 0.8 0 0 0 8.9 10.1V11.6A0.8 0.8 0 0 0 10.5 11.6V10.1A0.8 0.8 0 0 0 9.7 9.3Z"/></svg></div><div class="abs" style="left:1134.55px;top:11.200000000000001px"><svg xmlns="http://www.w3.org/2000/svg" viewBox="0 0 16 16" width="11.5" height="11.5" style=display:block;color:#ccc><path d="M3 5.8L8 10.8L13 5.8" fill="none" stroke="currentColor" stroke-width="1.35" /></svg></div><div class="abs" style="left:1483.3px;top:9px"><svg xmlns="http://www.w3.org/2000/svg" viewBox="0 0 16 16" width="16" height="16" style="display:block;color:#ccc;"><rect x="2.25" y="2.65" width="4.9" height="10.7" rx="1" fill="none" stroke="currentColor" stroke-width="1.05"/><rect x="10.27" y="2.65" width="3.93" height="3.55" rx="1" fill="none" stroke="currentColor" stroke-width="1.05"/><rect x="10.27" y="9.83" width="3.93" height="3.55" rx="1" fill="none" stroke="currentColor" stroke-width="1.05"/></svg></div><div class="abs" style="left:1509px;top:9px"><svg xmlns="http://www.w3.org/2000/svg" viewBox="0 0 16 16" width="16" height="16" style="display:block;color:#ccc;"><rect x="1.5" y="1.8" width="13" height="12.4" rx="1.3" fill="none" stroke="currentColor" stroke-width="1.05"/><path d="M2 2.3H7V13.7H2Z" fill="currentColor"/></svg></div><div class="abs" style="left:1534.8px;top:9px"><svg xmlns="http://www.w3.org/2000/svg" viewBox="0 0 16 16" width="16" height="16" style="display:block;color:#ccc;"><rect x="1.5" y="1.8" width="13" height="12.4" rx="1.3" fill="none" stroke="currentColor" stroke-width="1.05"/><path d="M2 10H14V13.7H2Z" fill="currentColor"/></svg></div><div class="abs" style="left:1561px;top:9px"><svg xmlns="http://www.w3.org/2000/svg" viewBox="0 0 16 16" width="16" height="16" style="display:block;color:#ccc;"><rect x="1.5" y="1.8" width="13" height="12.4" rx="1.3" fill="none" stroke="currentColor" stroke-width="1.05"/><path d="M9.2 1.8V14.2" fill="none" stroke="currentColor" stroke-width="1.05" /></svg></div></div><div class="abs nw" style="left:0;top:1111px;width:1592px;height:22px;background:#181818;border-top:1px solid #2b2b2b;font-size:12px;line-height:21px;color:#ccc"><div class="abs" style="left:0;top:0;width:34px;height:21px;background:#0078d4"><svg xmlns="http://www.w3.org/2000/svg" width="34" height="21" viewBox="0 0 34 21" style="display:block"><path d="M12.9 6.8L16.9 10.6L12.9 14.5M21 3.3L17.2 7L21 10.8" fill="none" stroke="#fff" stroke-width="1.1"/></svg></div><div class="abs" style="left:42.05px;top:2.75px"><svg xmlns="http://www.w3.org/2000/svg" viewBox="0 0 16 16" width="14.5" height="14.5" style="display:block;color:#ccc;"><path d="M2.2 2.8V13.2L9.8 8Z" fill="none" stroke="currentColor" stroke-width="1.05" stroke-linejoin="round"/><path d="M6.6 2.9L14 8L6.6 13.1" fill="none" stroke="currentColor" stroke-width="1.05" stroke-linejoin="round"/></svg></div><span class="abs" style="left:62.8px;top:-.5px;transform:translateY(.4px)"><span style="letter-spacing:0.223px">Run Testcases</span></span><div class="abs" style="left:160.5px;top:3.2px"><svg xmlns="http://www.w3.org/2000/svg" viewBox="0 0 16 16" width="13.6" height="13.6" style="display:block;color:#ccc;"><circle cx="8" cy="8" r="6.4" fill="none" stroke="currentColor" stroke-width="1.05"/><path d="M5.4 5.4L10.6 10.6M10.6 5.4L5.4 10.6" fill="none" stroke="currentColor" stroke-width="1.05" /></svg></div><span class="abs" style="left:178.1px;top:-.5px;transform:translateY(.4px)"><span style="letter-spacing:0.013px">0</span></span><div class="abs" style="left:189.2px;top:3.2px"><svg xmlns="http://www.w3.org/2000/svg" viewBox="0 0 16 16" width="13.6" height="13.6" style="display:block;color:#ccc;"><path d="M8 1.9L14.6 13.8H1.4Z" fill="none" stroke="currentColor" stroke-width="1.05" stroke-linejoin="round"/><path d="M8 6V10" fill="none" stroke="currentColor" stroke-width="1.05" /><circle cx="8" cy="11.9" r="0.65" fill="currentColor"/></svg></div><span class="abs" style="left:206.6px;top:-.5px;transform:translateY(.4px)"><span style="letter-spacing:0.013px">0</span></span><div class="abs" style="left:230.6px;top:3.5999999999999996px"><svg xmlns="http://www.w3.org/2000/svg" viewBox="0 0 16 16" width="12.8" height="12.8" style="display:block;color:#ccc;"><path d="M8 7.2L4.9 14.6M8 7.2L11.1 14.6M6 12H10" fill="none" stroke="currentColor" stroke-width="1.0" /><circle cx="8" cy="6" r="1.1" fill="none" stroke="currentColor" stroke-width="0.9"/><path d="M5.2 3.2A4 4 0 0 0 5.2 8.8M10.8 3.2A4 4 0 0 1 10.8 8.8" fill="none" stroke="currentColor" stroke-width="1.0" /><path d="M3.3 1.6A6.4 6.4 0 0 0 3.3 10.4M12.7 1.6A6.4 6.4 0 0 1 12.7 10.4" fill="none" stroke="currentColor" stroke-width="1.0" /></svg></div><span class="abs" style="left:247.5px;top:-.5px;transform:translateY(.4px)"><span style="letter-spacing:0.013px">0</span></span><span class="abs" style="left:271.3px;top:-.5px;transform:translateY(.4px)"><span style="letter-spacing:0.513px">-- NORMAL --</span></span><span class="abs" style="left:1200.3px;top:-.5px;transform:translateY(.4px)"><span style="letter-spacing:0.373px">Ln 11, Col 1</span></span><span class="abs" style="left:1286px;top:-.5px;transform:translateY(.4px)"><span style="letter-spacing:0.203px">Spaces: 2</span></span><span class="abs" style="left:1358.1px;top:-.5px;transform:translateY(.4px)"><span style="letter-spacing:0.32px">UTF-8</span></span><span class="abs" style="left:1410.4px;top:-.5px;transform:translateY(.4px)"><span style="letter-spacing:-0.458px">LF</span></span><div class="abs" style="left:1437.2px;top:2.5px"><svg xmlns="http://www.w3.org/2000/svg" viewBox="0 0 16 16" width="15" height="15" style="display:block;color:#ccc;"><path d="M5.6 2.2C4 2.2 3.8 3 3.8 4.2V6.2C3.8 7.2 3.2 7.8 2.2 8C3.2 8.2 3.8 8.8 3.8 9.8V11.8C3.8 13 4 13.8 5.6 13.8M10.4 2.2C12 2.2 12.2 3 12.2 4.2V6.2C12.2 7.2 12.8 7.8 13.8 8C12.8 8.2 12.2 8.8 12.2 9.8V11.8C12.2 13 12 13.8 10.4 13.8" fill="none" stroke="currentColor" stroke-width="1.05" /></svg></div><span class="abs" style="left:1458.1px;top:-.5px;transform:translateY(.4px)"><span style="letter-spacing:0.36px">TypeScript</span></span><div class="abs" style="left:1533.3px;top:3.3999999999999995px"><svg xmlns="http://www.w3.org/2000/svg" viewBox="0 0 16 16" width="13.8" height="13.8" style="display:block;color:#ccc;"><path fill="currentColor" fill-rule="evenodd" d="M8 1.7C7 0.7 3.5 0.5 2.3 1.9C1.4 3 1.5 5 1.9 6.3C0.9 7.2 0 8.6 0 10.2V11.2C1.2 13.6 4.6 15.4 8 15.4S14.8 13.6 16 11.2V10.2C16 8.6 15.1 7.2 14.1 6.3C14.5 5 14.6 3 13.7 1.9C12.5 0.5 9 0.7 8 1.7ZM3.4 3.4C4.2 2.6 6.3 2.7 6.8 3.5C7.2 4.4 7 6 6.4 6.6C5.6 7.3 3.9 7.2 3.4 6.5C3 5.7 2.9 4 3.4 3.4ZM12.6 3.4C11.8 2.6 9.7 2.7 9.2 3.5C8.8 4.4 9 6 9.6 6.6C10.4 7.3 12.1 7.2 12.6 6.5C13 5.7 13.1 4 12.6 3.4ZM3.2 8.6C4.8 8.9 6.6 8.3 8 7.2C9.4 8.3 11.2 8.9 12.8 8.6V12.4C11.4 13.3 9.7 13.8 8 13.8S4.6 13.3 3.2 12.4ZM6.3 9.3A0.8 0.8 0 0 0 5.5 10.1V11.6A0.8 0.8 0 0 0 7.1 11.6V10.1A0.8 0.8 0 0 0 6.3 9.3ZM9.7 9.3A0.8 0.8 0 0 0 8.9 10.1V11.6A0.8 0.8 0 0 0 10.5 11.6V10.1A0.8 0.8 0 0 0 9.7 9.3Z"/></svg></div><div class="abs" style="left:1562.6px;top:2.5px"><svg xmlns="http://www.w3.org/2000/svg" viewBox="0 0 16 16" width="15" height="15" style="display:block;color:#ccc;"><path d="M10.1 2.7A4.3 4.3 0 0 0 3.7 6.5V9.8L2.3 12.2H13.7L12.3 9.8V8.3" fill="none" stroke="currentColor" stroke-width="1.05" stroke-linejoin="round"/><path d="M6.4 12.4A1.6 1.6 0 0 0 9.6 12.4" fill="none" stroke="currentColor" stroke-width="1.05" /><circle cx="12.2" cy="4" r="2.4" fill="currentColor"/></svg></div></div></div><div id="winb"></div></div></body></html>
